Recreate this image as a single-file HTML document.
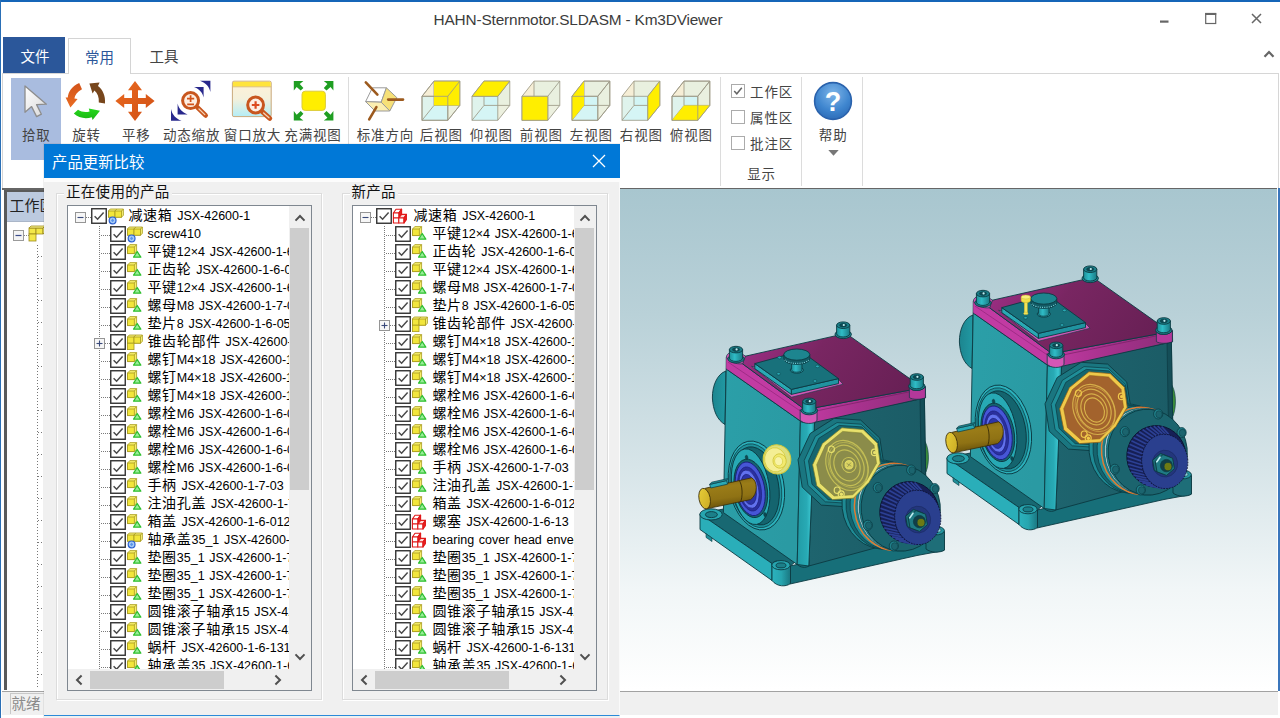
<!DOCTYPE html>
<html lang="zh-CN"><head><meta charset="utf-8"><title>HAHN-Sternmotor.SLDASM - Km3DViewer</title>
<style>
*{box-sizing:border-box;margin:0;padding:0}
html,body{width:1280px;height:718px;overflow:hidden;background:#fff}
body{font-family:"Liberation Sans","Noto Sans CJK SC",sans-serif;font-size:14px;color:#444}
#win{position:absolute;left:0;top:0;width:1280px;height:718px;background:#fff;overflow:hidden}
#win:before{content:"";position:absolute;left:0;top:0;width:1280px;height:2px;background:#1565b8;z-index:5}
#win:after{content:"";position:absolute;left:0;top:0;width:1.3px;height:718px;background:#2a6fb6;z-index:5}
#rborder{position:absolute}
#title{position:absolute;left:0;top:8px;width:1156px;text-align:center;font-size:15.4px;line-height:23px;color:#3c3c3c;letter-spacing:-0.17px}
#ctl{position:absolute;left:1150px;top:0}
#collapse{position:absolute;left:1263px;top:50px}
#tabs{position:absolute;left:0;top:37px;height:37px;width:1280px}
.tab{position:absolute;top:0;height:36px;line-height:41px;text-align:center;font-size:14.5px}
.tab.file{left:3px;width:62px;background:#2b579a;color:#fff;padding-left:2px}
.tab.home{left:68px;top:1px;width:63px;height:36px;border:1px solid #d4d4d4;border-bottom:none;background:#fff;color:#2b579a;z-index:2;line-height:39px}
.tab.tools{left:132px;width:64px;color:#444}
#ribbon{position:absolute;left:2px;top:73px;width:1277px;height:115px;border:1px solid #d6d6d6;border-bottom:none;background:#fff}
#ribbonline{position:absolute;left:2px;top:188px;width:1275px;height:1.6px;background:#666}
/* ribbon content uses absolute coords relative to page: offset -3,-74 */
#ribbon .abs{position:absolute}
.rbtn{position:absolute;top:4px;height:82px}
.rlabel{position:absolute;top:52px;font-size:13.5px;letter-spacing:0.85px;line-height:22px;text-indent:0.8px;white-space:nowrap;text-align:center;color:#444;transform:translateX(-50%)}
.rsep{position:absolute;top:3px;width:1px;height:109px;background:#dcdcdc}
.ricon{position:absolute}
.cb{position:absolute;width:13.5px;height:13.5px;border:1px solid #ababab;background:#fff}
.cbl{position:absolute;font-size:13.5px;letter-spacing:0.9px;line-height:22px;white-space:nowrap;color:#444}
#work{position:absolute;left:3.5px;top:190px;width:60px;height:500px;background:#fff;border-left:3px solid #5a5a5a;border-top:2.5px solid #5a5a5a}
#workhead{height:29.5px;background:#bccadf;font-size:15px;line-height:28px;padding-left:3px;color:#222;white-space:nowrap;border-bottom:1px solid #aab6c8}
#worktree{position:absolute;left:-1px;top:30.5px}
#view{position:absolute;left:620px;top:189px;width:656.8px;height:500.6px;background:linear-gradient(#a8c6cf 0%,#b9d1d8 25%,#d6e4e8 55%,#f1f6f7 80%,#fff 100%);overflow:hidden}
#view svg{position:absolute;left:0;top:0}
#rblue{position:absolute;left:1278.2px;top:188px;width:1.8px;height:502.5px;background:#3a76bc}
#status{position:absolute;left:1.5px;top:691px;width:1276px;height:23.5px;background:#f0f0f0;border-top:1.5px solid #a2a2a2}
#statuspane{position:absolute;left:8.5px;top:0.5px;width:400px;height:21px;border:1px solid #c8c8c8;border-right:none;border-bottom:none;font-size:14.5px;line-height:20px;padding-left:0.5px;color:#8a8a8a}
#dlgshadow{position:absolute;left:43px;top:142.5px;width:577px;height:576px;background:rgba(0,0,0,0.06)}
#dlg{position:absolute;left:44px;top:143.5px;width:576px;height:572px;background:#f0f0f0;border-bottom:1.5px solid #2b8ad8;border-right:1.5px solid #fafafa}
#dlgtitle{position:absolute;left:0;top:0;width:576px;height:34.5px;background:#0078d7;color:#fff;font-size:15.4px;line-height:37px;padding-left:8px}
#dlgtitle svg{position:absolute;left:548px;top:10.5px}
.grp{position:absolute;border:1px solid #dcdcdc;box-shadow:inset 1px 1px 0 #fff, 1px 1px 0 #fff}
.grplabel{position:absolute;font-size:14.5px;line-height:18px;color:#111;background:#f0f0f0;padding:0 2px;white-space:nowrap;letter-spacing:0.3px}
.tree{position:absolute;width:245px;height:486px;background:#fff;border:1px solid #7f8790;overflow:hidden}
.rows{position:absolute;left:0;top:0;width:221px;height:463px;overflow:hidden}
.row{position:absolute;left:0;height:18px;width:400px;white-space:nowrap;font-size:14px;line-height:18px;color:#111}
.row .t{position:absolute;top:-1.8px;font-family:"Liberation Sans","Noto Sans CJK SC",sans-serif;font-weight:400;color:#000;letter-spacing:0.7px}
.row .t b{font-weight:400;font-size:12.5px;letter-spacing:0;word-spacing:1.2px;font-family:"Liberation Sans",sans-serif}
.vs{position:absolute;left:221px;top:0;width:22px;height:463px;background:#f0f0f0}
.hs{position:absolute;left:0;top:463px;width:243px;height:21px;background:#f0f0f0}
.thumb{position:absolute;background:#cdcdcd}
.row .t b i{font-style:normal;font-size:14.5px;line-height:10px;letter-spacing:0.4px}

</style></head>
<body>
<div id="win">
<div id="title">HAHN-Sternmotor.SLDASM - Km3DViewer</div>
<svg id="ctl" width="130" height="40" viewBox="0 0 130 40">
 <rect x="10" y="20.5" width="8.5" height="2.2" fill="#666"/>
 <rect x="55.7" y="13.5" width="10" height="10" fill="none" stroke="#666" stroke-width="1.2"/>
 <rect x="55.2" y="13" width="11" height="2" fill="#666"/>
 <path d="M102 14 L111 23 M111 14 L102 23" stroke="#666" stroke-width="1.5" fill="none"/>
</svg>
<svg id="collapse" width="12" height="8" viewBox="0 0 12 8"><path d="M1.5 6.8 L6 2 L10.5 6.8" stroke="#666" stroke-width="2.2" fill="none"/></svg>
<div id="tabs">
 <div class="tab file">文件</div>
 <div class="tab home">常用</div>
 <div class="tab tools">工具</div>
</div>
<div id="ribbon">
<div class="abs" style="left:8.0px;top:4.3px;width:50px;height:81.5px;background:#a9bcdf"></div>
<svg class="ricon" style="left:15.0px;top:6.0px" width="36" height="42" viewBox="18 80 36 42"><defs><linearGradient id="gcur" x1="0" y1="0" x2="1" y2="1"><stop offset="0" stop-color="#ffffff"/><stop offset="1" stop-color="#d8d8d8"/></linearGradient></defs><path d="M25 86 L25 112.3 L31.6 106.6 L36.6 116.6 L41.4 114.2 L36.6 104.6 L46.4 104.2 Z" fill="url(#gcur)" stroke="#8d8d8d" stroke-width="1.3" stroke-linejoin="round"/></svg>
<div class="rlabel" style="left:32.9px;top:51.2px">拾取</div>
<svg class="ricon" style="left:59.0px;top:4.0px" width="48" height="46" viewBox="62 78 48 46"><defs><linearGradient id="gor" x1="0" y1="0" x2="0" y2="1"><stop offset="0" stop-color="#d2531a"/><stop offset="1" stop-color="#ea6c22"/></linearGradient><linearGradient id="ggr" x1="0" y1="0" x2="0" y2="1"><stop offset="0" stop-color="#25d81d"/><stop offset="1" stop-color="#1bb513"/></linearGradient></defs><path d="M79.2 83 C72 86 68.2 91.8 67.8 97.6 L65.6 97.4 L70.4 107.4 L77.6 99 L74.4 98.6 C74.8 95 77.4 91.6 82 89.2 Z" fill="url(#gor)"/><path d="M89.4 83.6 L99.6 82.4 L98 86 C103 90 105.6 96 105 103.4 L98.8 102.4 C99.2 97.4 97.6 93.2 94.4 90.6 L92.6 93.4 Z" fill="#77461c"/><path d="M73.8 113.6 C78.6 118.2 86 119.2 91.8 117.2 L92.6 120 L100 110.8 L88.8 108.4 L89.6 111.4 C85.6 112.6 81.6 112 78 109.8 Z" fill="url(#ggr)"/></svg>
<div class="rlabel" style="left:83.2px;top:51.2px">旋转</div>
<svg class="ricon" style="left:109.0px;top:4.0px" width="46" height="46" viewBox="112 78 46 46"><defs><linearGradient id="gpn" x1="0" y1="0" x2="1" y2="1"><stop offset="0" stop-color="#ea6a20"/><stop offset="1" stop-color="#d04f14"/></linearGradient></defs><path d="M135 81 L142 90.2 H138 V98 H145.8 V94 L154.6 101 L145.8 108 V104 H138 V111.8 H142 L135 121 L128 111.8 H132 V104 H124.2 V108 L115.4 101 L124.2 94 V98 H132 V90.2 H128 Z" fill="url(#gpn)"/></svg>
<div class="rlabel" style="left:132.9px;top:51.2px">平移</div>
<svg class="ricon" style="left:165.0px;top:4.0px" width="46" height="46" viewBox="168 78 46 46"><g fill="#28288c"><path d="M200 80.8 H210.4 V92 C209.4 87 206 83 200 80.8Z"/><path d="M194 87 H203.6 V97.6 C202.6 92.6 199.4 89 194 87Z"/><path d="M181.6 120.8 H171 V109 C172.2 114.6 175.6 118.6 181.6 120.8Z"/><path d="M187.6 114.4 H177.6 V103.6 C178.6 108.6 182 112.4 187.6 114.4Z"/></g><path d="M197.4 107.4 L205.6 115.4" stroke="#c8561e" stroke-width="4.8" stroke-linecap="round"/><path d="M199 109 L204.8 114.6" stroke="#f6d2b4" stroke-width="1.3" stroke-linecap="round"/><circle cx="190.6" cy="100.6" r="8" fill="#fdeee2" stroke="#c8561e" stroke-width="3"/><path d="M187 98.6 H194.2 M190.6 95.2 V102 M187.2 104.4 H194" stroke="#d2521a" stroke-width="1.7" fill="none"/></svg>
<div class="rlabel" style="left:188.2px;top:51.2px">动态缩放</div>
<svg class="ricon" style="left:225.0px;top:4.0px" width="48" height="46" viewBox="228 78 48 46"><defs><linearGradient id="gwin" x1="0" y1="0" x2="0" y2="1"><stop offset="0" stop-color="#fff1d6"/><stop offset="0.5" stop-color="#f4f1dc"/><stop offset="1" stop-color="#b4edf6"/></linearGradient></defs><rect x="232.4" y="81.2" width="38.8" height="35.4" rx="1.5" fill="url(#gwin)" stroke="#c9a97c" stroke-width="1"/><path d="M232.9 86.6 V82.7 Q232.9 81.7 233.9 81.7 H269.7 Q270.7 81.7 270.7 82.7 V86.6 Z" fill="#ffe43c"/><path d="M232.4 86.8 H271.2" stroke="#d8b860" stroke-width="0.8"/><path d="M262.2 111.6 L269.8 118.4" stroke="#c8561e" stroke-width="4.8" stroke-linecap="round"/><path d="M263.6 113 L269 117.8" stroke="#f6d2b4" stroke-width="1.3" stroke-linecap="round"/><circle cx="255.6" cy="105" r="7.9" fill="#fdeee2" stroke="#c8561e" stroke-width="3"/><path d="M251.8 105 H259.4 M255.6 101.2 V108.8" stroke="#dc4a1e" stroke-width="2.2" fill="none"/></svg>
<div class="rlabel" style="left:249.1px;top:51.2px">窗口放大</div>
<svg class="ricon" style="left:287.0px;top:4.0px" width="48" height="46" viewBox="290 78 48 46"><rect x="302" y="91.2" width="23.4" height="19.2" rx="3.2" fill="#ffee00" stroke="#dccb3a" stroke-width="1"/><path d="M293.8 81 L303.40000000000003 81 L299.752 83.88 L303.40000000000003 87.912 L300.712 90.6 L296.68 86.952 L293.8 90.6 Z" fill="#1f9e22"/><path d="M333.4 81 L323.79999999999995 81 L327.448 83.88 L323.79999999999995 87.912 L326.488 90.6 L330.52 86.952 L333.4 90.6 Z" fill="#1f9e22"/><path d="M293.8 120.6 L303.40000000000003 120.6 L299.752 117.72 L303.40000000000003 113.68799999999999 L300.712 111.0 L296.68 114.648 L293.8 111.0 Z" fill="#1f9e22"/><path d="M333.4 120.6 L323.79999999999995 120.6 L327.448 117.72 L323.79999999999995 113.68799999999999 L326.488 111.0 L330.52 114.648 L333.4 111.0 Z" fill="#1f9e22"/></svg>
<div class="rlabel" style="left:309.6px;top:51.2px">充满视图</div>
<div class="rsep" style="left:344.5px"></div>
<svg class="ricon" style="left:357.0px;top:4.0px" width="48" height="46" viewBox="360 78 48 46"><g stroke="#9a9a9a" stroke-width="1" stroke-linejoin="round"><path d="M372.4 87.8 H386.4 L381.2 102.2 L365.6 101.6 Z" fill="#ffffff"/><path d="M386.4 87.8 L396.8 97.6 L389.8 111 L381.2 102.2 Z" fill="#f6e078"/><path d="M365.6 101.6 L381.2 102.2 L389.8 111 H375 Z" fill="#fbeeb0"/></g><g stroke="#9c5a1e" stroke-width="2.6" stroke-linecap="round"><path d="M365.8 82.4 L377.4 94.6"/><path d="M388.2 99.6 H403"/><path d="M376.4 107.2 L369.2 119.4"/></g></svg>
<div class="rlabel" style="left:382.0px;top:51.2px">标准方向</div>
<svg class="ricon" style="left:416.2px;top:4.0px" width="46" height="46" viewBox="419.2 78 46 46"><path d="M422.2 96.3 L434.2 81.1 V105.4 L422.2 120.3 Z" fill="#f6eed6" fill-opacity="1"/><path d="M422.2 120.3 L434.2 105.4 H460.0 L448.0 120.3 Z" fill="#d2f4f4" fill-opacity="1"/><path d="M422.2 96.3 L434.2 81.1 H460.0 L448.0 96.3 Z" fill="#f6eed6" fill-opacity="0.7"/><path d="M448.0 96.3 L460.0 81.1 V105.4 L448.0 120.3 Z" fill="#f6eed6" fill-opacity="0.7"/><path d="M422.2 96.3 H448.0 V120.3 H422.2 Z" fill="#d6f5f5" fill-opacity="0.7"/><g stroke="#9d9a86" stroke-width="0.85" fill="none" stroke-linejoin="round"><path d="M434.2 81.1 H460.0 V105.4 H434.2 Z"/><path d="M422.2 96.3 H448.0 V120.3 H422.2 Z"/><path d="M422.2 96.3 L434.2 81.1 M448.0 96.3 L460.0 81.1 M448.0 120.3 L460.0 105.4 M422.2 120.3 L434.2 105.4"/></g><path d="M434.2 81.1 H460.0 V105.4 H434.2 Z" fill="#ffee00"/><g stroke="#9d9a86" stroke-width="0.85" fill="none" stroke-linejoin="round"><path d="M422.2 96.3 H448.0 V120.3 H422.2 Z"/><path d="M422.2 96.3 L434.2 81.1 H460.0 V105.4 L448.0 120.3 M448.0 96.3 L460.0 81.1"/></g></svg>
<div class="rlabel" style="left:438.0px;top:51.2px">后视图</div>
<svg class="ricon" style="left:466.2px;top:4.0px" width="46" height="46" viewBox="469.2 78 46 46"><path d="M484.2 81.1 H510.0 V105.4 H484.2 Z" fill="#c9f3f5" fill-opacity="1"/><path d="M472.2 96.3 L484.2 81.1 V105.4 L472.2 120.3 Z" fill="#f6eed6" fill-opacity="1"/><path d="M472.2 120.3 L484.2 105.4 H510.0 L498.0 120.3 Z" fill="#d2f4f4" fill-opacity="1"/><path d="M498.0 96.3 L510.0 81.1 V105.4 L498.0 120.3 Z" fill="#f6eed6" fill-opacity="0.7"/><path d="M472.2 96.3 H498.0 V120.3 H472.2 Z" fill="#d6f5f5" fill-opacity="0.7"/><g stroke="#9d9a86" stroke-width="0.85" fill="none" stroke-linejoin="round"><path d="M484.2 81.1 H510.0 V105.4 H484.2 Z"/><path d="M472.2 96.3 H498.0 V120.3 H472.2 Z"/><path d="M472.2 96.3 L484.2 81.1 M498.0 96.3 L510.0 81.1 M498.0 120.3 L510.0 105.4 M472.2 120.3 L484.2 105.4"/></g><path d="M472.2 96.3 L484.2 81.1 H510.0 L498.0 96.3 Z" fill="#ffee00"/><g stroke="#9d9a86" stroke-width="0.85" fill="none" stroke-linejoin="round"><path d="M472.2 96.3 L484.2 81.1 H510.0 L498.0 96.3 Z"/></g></svg>
<div class="rlabel" style="left:488.0px;top:51.2px">仰视图</div>
<svg class="ricon" style="left:516.2px;top:4.0px" width="46" height="46" viewBox="519.2 78 46 46"><path d="M534.2 81.1 H560.0 V105.4 H534.2 Z" fill="#c9f3f5" fill-opacity="1"/><path d="M522.2 96.3 L534.2 81.1 V105.4 L522.2 120.3 Z" fill="#f6eed6" fill-opacity="1"/><path d="M522.2 120.3 L534.2 105.4 H560.0 L548.0 120.3 Z" fill="#d2f4f4" fill-opacity="1"/><path d="M522.2 96.3 L534.2 81.1 H560.0 L548.0 96.3 Z" fill="#f6eed6" fill-opacity="0.7"/><path d="M548.0 96.3 L560.0 81.1 V105.4 L548.0 120.3 Z" fill="#f6eed6" fill-opacity="0.7"/><g stroke="#9d9a86" stroke-width="0.85" fill="none" stroke-linejoin="round"><path d="M534.2 81.1 H560.0 V105.4 H534.2 Z"/><path d="M522.2 96.3 H548.0 V120.3 H522.2 Z"/><path d="M522.2 96.3 L534.2 81.1 M548.0 96.3 L560.0 81.1 M548.0 120.3 L560.0 105.4 M522.2 120.3 L534.2 105.4"/></g><path d="M522.2 96.3 H548.0 V120.3 H522.2 Z" fill="#ffee00"/><g stroke="#9d9a86" stroke-width="0.85" fill="none" stroke-linejoin="round"><path d="M522.2 96.3 H548.0 V120.3 H522.2 Z"/></g></svg>
<div class="rlabel" style="left:538.0px;top:51.2px">前视图</div>
<svg class="ricon" style="left:566.2px;top:4.0px" width="46" height="46" viewBox="569.2 78 46 46"><path d="M584.2 81.1 H610.0 V105.4 H584.2 Z" fill="#c9f3f5" fill-opacity="1"/><path d="M572.2 120.3 L584.2 105.4 H610.0 L598.0 120.3 Z" fill="#d2f4f4" fill-opacity="1"/><path d="M572.2 96.3 L584.2 81.1 H610.0 L598.0 96.3 Z" fill="#f6eed6" fill-opacity="0.7"/><path d="M598.0 96.3 L610.0 81.1 V105.4 L598.0 120.3 Z" fill="#f6eed6" fill-opacity="0.7"/><path d="M572.2 96.3 H598.0 V120.3 H572.2 Z" fill="#d6f5f5" fill-opacity="0.7"/><g stroke="#9d9a86" stroke-width="0.85" fill="none" stroke-linejoin="round"><path d="M584.2 81.1 H610.0 V105.4 H584.2 Z"/><path d="M572.2 96.3 H598.0 V120.3 H572.2 Z"/><path d="M572.2 96.3 L584.2 81.1 M598.0 96.3 L610.0 81.1 M598.0 120.3 L610.0 105.4 M572.2 120.3 L584.2 105.4"/></g><path d="M572.2 96.3 L584.2 81.1 V105.4 L572.2 120.3 Z" fill="#ffee00"/><g stroke="#9d9a86" stroke-width="0.85" fill="none" stroke-linejoin="round"><path d="M572.2 96.3 H598.0 V120.3 H572.2 Z"/><path d="M572.2 96.3 L584.2 81.1 H610.0 V105.4 L598.0 120.3 M598.0 96.3 L610.0 81.1"/></g></svg>
<div class="rlabel" style="left:588.0px;top:51.2px">左视图</div>
<svg class="ricon" style="left:616.2px;top:4.0px" width="46" height="46" viewBox="619.2 78 46 46"><path d="M634.2 81.1 H660.0 V105.4 H634.2 Z" fill="#c9f3f5" fill-opacity="1"/><path d="M622.2 96.3 L634.2 81.1 V105.4 L622.2 120.3 Z" fill="#f6eed6" fill-opacity="1"/><path d="M622.2 120.3 L634.2 105.4 H660.0 L648.0 120.3 Z" fill="#d2f4f4" fill-opacity="1"/><path d="M622.2 96.3 L634.2 81.1 H660.0 L648.0 96.3 Z" fill="#f6eed6" fill-opacity="0.7"/><path d="M622.2 96.3 H648.0 V120.3 H622.2 Z" fill="#d6f5f5" fill-opacity="0.7"/><g stroke="#9d9a86" stroke-width="0.85" fill="none" stroke-linejoin="round"><path d="M634.2 81.1 H660.0 V105.4 H634.2 Z"/><path d="M622.2 96.3 H648.0 V120.3 H622.2 Z"/><path d="M622.2 96.3 L634.2 81.1 M648.0 96.3 L660.0 81.1 M648.0 120.3 L660.0 105.4 M622.2 120.3 L634.2 105.4"/></g><path d="M648.0 96.3 L660.0 81.1 V105.4 L648.0 120.3 Z" fill="#ffee00"/><g stroke="#9d9a86" stroke-width="0.85" fill="none" stroke-linejoin="round"><path d="M648.0 96.3 L660.0 81.1 V105.4 L648.0 120.3 Z"/></g></svg>
<div class="rlabel" style="left:638.0px;top:51.2px">右视图</div>
<svg class="ricon" style="left:666.2px;top:4.0px" width="46" height="46" viewBox="669.2 78 46 46"><path d="M684.2 81.1 H710.0 V105.4 H684.2 Z" fill="#c9f3f5" fill-opacity="1"/><path d="M672.2 96.3 L684.2 81.1 V105.4 L672.2 120.3 Z" fill="#f6eed6" fill-opacity="1"/><path d="M672.2 96.3 L684.2 81.1 H710.0 L698.0 96.3 Z" fill="#f6eed6" fill-opacity="0.7"/><path d="M698.0 96.3 L710.0 81.1 V105.4 L698.0 120.3 Z" fill="#f6eed6" fill-opacity="0.7"/><path d="M672.2 96.3 H698.0 V120.3 H672.2 Z" fill="#d6f5f5" fill-opacity="0.7"/><g stroke="#9d9a86" stroke-width="0.85" fill="none" stroke-linejoin="round"><path d="M684.2 81.1 H710.0 V105.4 H684.2 Z"/><path d="M672.2 96.3 H698.0 V120.3 H672.2 Z"/><path d="M672.2 96.3 L684.2 81.1 M698.0 96.3 L710.0 81.1 M698.0 120.3 L710.0 105.4 M672.2 120.3 L684.2 105.4"/></g><path d="M672.2 120.3 L684.2 105.4 H710.0 L698.0 120.3 Z" fill="#ffee00"/><g stroke="#9d9a86" stroke-width="0.85" fill="none" stroke-linejoin="round"><path d="M672.2 96.3 H698.0 V120.3 H672.2 Z"/><path d="M672.2 96.3 L684.2 81.1 H710.0 V105.4 L698.0 120.3 M698.0 96.3 L710.0 81.1"/></g></svg>
<div class="rlabel" style="left:688.0px;top:51.2px">俯视图</div>
<div class="rsep" style="left:717.4px"></div>
<div class="cb" style="left:728.3px;top:10.4px"><svg width="12" height="12" viewBox="0 0 12 12" style="position:absolute;left:0;top:0"><path d="M2.2 6 L4.8 8.8 L9.8 2.8" fill="none" stroke="#666" stroke-width="1.5"/></svg></div>
<div class="cbl" style="left:747.0px;top:8.4px">工作区</div>
<div class="cb" style="left:728.3px;top:36.4px"></div>
<div class="cbl" style="left:747.0px;top:34.4px">属性区</div>
<div class="cb" style="left:728.3px;top:62.4px"></div>
<div class="cbl" style="left:747.0px;top:60.4px">批注区</div>
<div class="rlabel" style="left:758.2px;top:90px">显示</div>
<div class="rsep" style="left:798.4px"></div>
<svg class="ricon" style="left:809.0px;top:6.0px" width="42" height="42" viewBox="812 80 42 42"><defs><radialGradient id="ghl" cx="0.5" cy="0.3" r="0.75"><stop offset="0" stop-color="#7db4e8"/><stop offset="0.6" stop-color="#3f86cf"/><stop offset="1" stop-color="#2a68b4"/></radialGradient></defs><circle cx="833" cy="101" r="18.4" fill="url(#ghl)" stroke="#2a62ac" stroke-width="1.6"/><text x="833" y="110.6" text-anchor="middle" font-family="Liberation Sans, sans-serif" font-weight="700" font-size="27" fill="#fff">?</text></svg>
<div class="rlabel" style="left:829.8px;top:51.2px">帮助</div>
<svg class="ricon" style="left:824.6px;top:76.0px" width="11" height="6" viewBox="0 0 11 6"><path d="M0.3 0 H10.7 L5.5 5.8 Z" fill="#777"/></svg>
<div class="rsep" style="left:859.2px"></div>
</div>
<div id="ribbonline"></div>
<div id="work">
 <div id="workhead">工作区</div>
 <svg id="worktree" width="40" height="466" viewBox="0 0 40 466">
  <rect x="7.5" y="7.5" width="10" height="10" fill="#f4f4f4" stroke="#9a9a9a"/>
  <path d="M9.5 12.5 H15.5" stroke="#3a4a8a" stroke-width="1.2"/>
  <path d="M18 12.5 H23" stroke="#888" stroke-dasharray="1 1"/>
  <g stroke="#9c8a1e" stroke-width="0.8" fill="#f3e84a">
   <rect x="23" y="5" width="7" height="6"/><rect x="30" y="5" width="7" height="6"/><rect x="23" y="11" width="7" height="7"/>
   <path d="M23 5 l2 -2 h14 l-2 2 z M37 5 l2 -2 v6 l-2 2 z" fill="#fbf38a"/>
  </g>
  <path d="M31.5 22 V466" stroke="#777" stroke-dasharray="1 2"/>
  <g stroke="#777" stroke-dasharray="1 2">
   <path d="M32 33.5 H46"/><path d="M32 55.5 H46"/><path d="M32 77.5 H46"/><path d="M32 99.5 H46"/><path d="M32 121.5 H46"/><path d="M32 143.5 H46"/><path d="M32 165.5 H46"/><path d="M32 187.5 H46"/><path d="M32 209.5 H46"/><path d="M32 231.5 H46"/><path d="M32 253.5 H46"/><path d="M32 275.5 H46"/><path d="M32 297.5 H46"/><path d="M32 319.5 H46"/><path d="M32 341.5 H46"/><path d="M32 363.5 H46"/><path d="M32 385.5 H46"/><path d="M32 407.5 H46"/><path d="M32 429.5 H46"/><path d="M32 451.5 H46"/><path d="M32 473.5 H46"/>
  </g>
 </svg>
</div>
<div id="view">
<svg width="657.5" height="501" viewBox="620 189 657.5 501"><defs>
<linearGradient id="gleft" x1="0" y1="0" x2="1" y2="0.3"><stop offset="0" stop-color="#2b9fa8"/><stop offset="1" stop-color="#2a9aa3"/></linearGradient>
<linearGradient id="gright" x1="0" y1="0" x2="1" y2="0"><stop offset="0" stop-color="#1e646e"/><stop offset="1" stop-color="#1b5c66"/></linearGradient>
<linearGradient id="gcol" x1="0" y1="0" x2="1" y2="0"><stop offset="0" stop-color="#219ba5"/><stop offset="0.55" stop-color="#28aab5"/><stop offset="0.8" stop-color="#3cc6d0"/><stop offset="1" stop-color="#1f8f99"/></linearGradient>
<linearGradient id="gbulge" x1="0" y1="0" x2="1" y2="0"><stop offset="0" stop-color="#1c858f"/><stop offset="1" stop-color="#2199a3"/></linearGradient>
<linearGradient id="gfoot" x1="0" y1="0" x2="1" y2="0"><stop offset="0" stop-color="#2bb2bd"/><stop offset="0.5" stop-color="#27a5af"/><stop offset="1" stop-color="#1a7680"/></linearGradient>
<linearGradient id="gbolt" x1="0" y1="0" x2="1" y2="0"><stop offset="0" stop-color="#1f8f99"/><stop offset="0.4" stop-color="#2fbcc6"/><stop offset="1" stop-color="#1a7a84"/></linearGradient>
<linearGradient id="gtop" x1="0" y1="0.2" x2="1" y2="0.5"><stop offset="0" stop-color="#9c2e84"/><stop offset="0.4" stop-color="#792662"/><stop offset="1" stop-color="#682055"/></linearGradient>
<linearGradient id="gshaft" x1="0" y1="0" x2="0.22" y2="1"><stop offset="0" stop-color="#7a600e"/><stop offset="0.35" stop-color="#9a7c18"/><stop offset="0.7" stop-color="#8f7214"/><stop offset="1" stop-color="#68510a"/></linearGradient>
<linearGradient id="gband" x1="0" y1="0" x2="1" y2="0"><stop offset="0" stop-color="#c23ba3"/><stop offset="0.45" stop-color="#a8328e"/><stop offset="1" stop-color="#8c2d78"/></linearGradient>
<linearGradient id="gshaftend" x1="0" y1="0" x2="1" y2="1"><stop offset="0" stop-color="#e9cf3a"/><stop offset="1" stop-color="#c9a922"/></linearGradient>
</defs><g transform="translate(0 0)">
<path d="M726 371 C717 374 712.2 386 712.4 398 C713 410 717 420 725 424.5 Z" fill="url(#gbulge)" stroke="#0b3a42" stroke-width="0.9"/>
<path d="M924 440 C929 446 930 462 926 472 L924 472 Z" fill="#3a8a3a" stroke="#0b3a42" stroke-width="0.6"/>
<path d="M790.0 566.0 L917.0 538.0 L944.0 532.0 L944.0 550.5 L917.0 555.5 L790.0 584.0 Z" fill="#176f79" stroke="#0b3a42" stroke-width="0.9" stroke-linejoin="round" />
<path d="M700.0 513.8 L723.4 509.0 L797.0 560.0 L790.0 566.5 L772.0 563.5 Z" fill="#186872" stroke="#0b3a42" stroke-width="0.9" stroke-linejoin="round" />
<path d="M700.0 513.8 L772.0 563.5 L772.0 580.5 L700.0 529.5 Z" fill="#2aaeb9" stroke="#0b3a42" stroke-width="0.9" stroke-linejoin="round" />
<path d="M706.0 533.8 L706.0 537.4 L712.0 541.6 L712.0 538.0 Z" fill="#1f8f99" stroke="#0b3a42" stroke-width="0.6" stroke-linejoin="round" />
<path d="M772 563.5 C774 559.5 788 559.8 790.5 566 V583.5 C786 587 777 587 772 580.5 Z" fill="url(#gfoot)" stroke="#0b3a42" stroke-width="0.9"/>
<ellipse cx="781.0" cy="565.2" rx="9.2" ry="4.6" fill="#27a5af" stroke="#0b3a42" stroke-width="0.9" />
<ellipse cx="781.0" cy="565.4" rx="5.0" ry="2.5" fill="#1b7f89" stroke="#0b3a42" stroke-width="0.9" />
<ellipse cx="711.0" cy="514.4" rx="11.2" ry="5.6" fill="#27a5af" stroke="#0b3a42" stroke-width="0.9" />
<ellipse cx="711.4" cy="514.6" rx="6.0" ry="3.0" fill="#1b7f89" stroke="#0b3a42" stroke-width="0.9" />
<path d="M926 530 C928 525.5 942 525.8 944.5 531.5 V550 C940 553 931 553 926 549 Z" fill="#1e6e78" stroke="#0b3a42" stroke-width="0.9"/>
<ellipse cx="935.2" cy="530.6" rx="9.2" ry="4.4" fill="#2497a1" stroke="#0b3a42" stroke-width="0.9" />
<ellipse cx="936.4" cy="530.2" rx="4.6" ry="2.2" fill="#8fd6dc" stroke="#0b3a42" stroke-width="0.6" />
<path d="M726.2 368.8 L800.4 421.0 L797.2 564.5 L723.4 512.6 Z" fill="url(#gleft)" stroke="#0b3a42" stroke-width="0.9" stroke-linejoin="round" />
<path d="M814.6 421.5 L924.4 398.0 L926.6 534.0 L808.8 566.0 Z" fill="url(#gright)" stroke="#0b3a42" stroke-width="0.9" stroke-linejoin="round" />
<path d="M800.4 420.0 L814.6 421.5 L808.8 566.0 L797.2 564.5 Z" fill="url(#gcol)" stroke="#0b3a42" stroke-width="0.9" stroke-linejoin="round" />
<path d="M808.8 566 C806 568.4 800 567.6 797.2 564.5" fill="none" stroke="#0b3a42" stroke-width="0.9" stroke-linecap="round" />
<path d="M920.0 399.0 L924.4 398.0 L926.6 534.0 L922.4 535.2 Z" fill="#154e58" stroke="#0b3a42" stroke-width="0.7" stroke-linejoin="round" />
<ellipse cx="756.4" cy="485.5" rx="27.4" ry="45.0" fill="#2bb0bb" stroke="#0b3a42" stroke-width="0.9" transform="rotate(-11 756.4 485.5)" />
<ellipse cx="755.8" cy="485.7" rx="25.2" ry="42.4" fill="#1f929c" stroke="#0b3a42" stroke-width="0.7" transform="rotate(-11 755.8 485.7)" />
<ellipse cx="755.9" cy="485.9" rx="22.6" ry="39.6" fill="#14646e" stroke="#0b3a42" stroke-width="0.9" transform="rotate(-11 755.9 485.9)" />
<ellipse cx="750.6" cy="486.7" rx="18.6" ry="38.2" fill="#27a9b4" stroke="#0b3a42" stroke-width="0.9" transform="rotate(-9 750.6 486.7)" />
<ellipse cx="746.6" cy="457.4" rx="1.3" ry="2.2" fill="#0f4a54" stroke="#0b3a42" stroke-width="0.5" transform="rotate(-11 746.6 457.4)" />
<ellipse cx="765.0" cy="514.6" rx="1.3" ry="2.2" fill="#0f4a54" stroke="#0b3a42" stroke-width="0.5" transform="rotate(-11 765.0 514.6)" />
<ellipse cx="750.8" cy="488.4" rx="16.2" ry="29.6" fill="#14646e" stroke="#0b3a42" stroke-width="0.9" transform="rotate(-11 750.8 488.4)" />
<ellipse cx="750.2" cy="488.8" rx="14.4" ry="27.2" fill="#4656d6" stroke="#1a1f7a" stroke-width="0.9" transform="rotate(-11 750.2 488.8)" />
<ellipse cx="749.6" cy="489.0" rx="11.4" ry="22.4" fill="#2a2f9e" stroke="#1a1f7a" stroke-width="0.6" transform="rotate(-11 749.6 489.0)" />
<ellipse cx="749.0" cy="489.2" rx="9.6" ry="19.4" fill="#6272ee" stroke="#1a1f7a" stroke-width="0.6" transform="rotate(-11 749.0 489.2)" />
<ellipse cx="748.6" cy="489.4" rx="7.4" ry="15.4" fill="#2c34a8" stroke="#1a1f7a" stroke-width="0.6" transform="rotate(-11 748.6 489.4)" />
<path d="M705.2 488.3 L751.6 477.8 C757.6 480.6 758.4 494 750.6 499.6 L706.4 508.8 Z" fill="url(#gshaft)" stroke="#3a2c06" stroke-width="0.8"/>
<path d="M739.4 480.6 C742.6 485 743 497 740.6 501.8" fill="none" stroke="#3a2c06" stroke-width="0.9" stroke-linecap="round" />
<ellipse cx="704.6" cy="498.6" rx="5.6" ry="10.4" fill="url(#gshaftend)" stroke="#3a2c06" stroke-width="0.8" transform="rotate(-11 704.6 498.6)" />
<path d="M709.6 484.4 L726.4 480.6 L727.6 484.2 L710.8 488.0 Z" fill="#2aa9b4" stroke="#0b3a42" stroke-width="0.7" stroke-linejoin="round" />
<path d="M709.6 484.4 L711.6 482.2 L727.8 478.6 L726.4 480.6 Z" fill="#1f8f99" stroke="#0b3a42" stroke-width="0.7" stroke-linejoin="round" />
<path d="M884.0 465.4 L871.8 491.7 L847.8 506.9 L821.3 505.1 L802.2 487.1 L798.0 459.8 L810.2 433.5 L834.2 418.3 L860.7 420.1 L879.8 438.1 Z" fill="#1a7680" stroke="#0b3a42" stroke-width="0.9" stroke-linejoin="round" />
<path d="M882.2 465.6 L871.1 489.6 L849.4 503.4 L825.3 501.8 L808.0 485.4 L804.2 460.4 L815.3 436.4 L837.0 422.6 L861.1 424.2 L878.4 440.6 Z" fill="#1f8e98" stroke="#0b3a42" stroke-width="0.7" stroke-linejoin="round" />
<path d="M881.5 465.7 L871.2 488.3 L850.8 501.2 L828.2 499.7 L812.0 484.3 L808.5 460.9 L818.8 438.3 L839.2 425.4 L861.8 426.9 L878.0 442.3 Z" fill="#15666f" stroke="#0b3a42" stroke-width="0.7" stroke-linejoin="round" />
<ellipse cx="882.0" cy="504.5" rx="40.0" ry="44.5" fill="#1e8a94" stroke="#0b3a42" stroke-width="0.9" transform="rotate(-6 882.0 504.5)" />
<ellipse cx="886.0" cy="505.5" rx="40.0" ry="44.2" fill="#15646e" stroke="#0b3a42" stroke-width="0.7" transform="rotate(-6 886.0 505.5)" />
<ellipse cx="890.0" cy="506.2" rx="39.9" ry="43.8" fill="#1f8e98" stroke="#0b3a42" stroke-width="0.7" transform="rotate(-6 890.0 506.2)" />
<ellipse cx="894.3" cy="506.8" rx="39.8" ry="43.5" fill="#1d828c" stroke="#e27c32" stroke-width="1.5" transform="rotate(-6 894.3 506.8)" />
<ellipse cx="897.2" cy="507.4" rx="39.6" ry="43.3" fill="#c6ecf0" stroke="#0b3a42" stroke-width="0.5" transform="rotate(-6 897.2 507.4)" />
<ellipse cx="898.8" cy="507.8" rx="39.6" ry="43.2" fill="#1d828c" stroke="#0b3a42" stroke-width="0.6" transform="rotate(-6 898.8 507.8)" />
<ellipse cx="900.7" cy="508.2" rx="39.6" ry="43.0" fill="#1b646e" stroke="#0b3a42" stroke-width="0.9" transform="rotate(-6 900.7 508.2)" />
<ellipse cx="911.2" cy="470.0" rx="4.6" ry="5.0" fill="#1f7f89" stroke="#0b3a42" stroke-width="0.8" />
<ellipse cx="912.0" cy="470.3" rx="3.2" ry="3.6" fill="#1b646e" stroke="#0b3a42" stroke-width="0.5" />
<ellipse cx="877.8" cy="487.6" rx="4.6" ry="5.0" fill="#1f7f89" stroke="#0b3a42" stroke-width="0.8" />
<ellipse cx="878.6" cy="487.9" rx="3.2" ry="3.6" fill="#1b646e" stroke="#0b3a42" stroke-width="0.5" />
<ellipse cx="867.8" cy="525.2" rx="4.6" ry="5.0" fill="#1f7f89" stroke="#0b3a42" stroke-width="0.8" />
<ellipse cx="868.6" cy="525.5" rx="3.2" ry="3.6" fill="#1b646e" stroke="#0b3a42" stroke-width="0.5" />
<ellipse cx="893.8" cy="546.0" rx="4.6" ry="5.0" fill="#1f7f89" stroke="#0b3a42" stroke-width="0.8" />
<ellipse cx="894.6" cy="546.3" rx="3.2" ry="3.6" fill="#1b646e" stroke="#0b3a42" stroke-width="0.5" />
<ellipse cx="934.6" cy="488.6" rx="4.6" ry="5.0" fill="#1f7f89" stroke="#0b3a42" stroke-width="0.8" />
<ellipse cx="935.4" cy="488.9" rx="3.2" ry="3.6" fill="#1b646e" stroke="#0b3a42" stroke-width="0.5" />
<ellipse cx="909.4" cy="512.4" rx="29.6" ry="30.8" fill="#161f55" stroke="#0c1130" stroke-width="0.9" transform="rotate(-6 909.4 512.4)" />
<path d="M910.4 542.8 L918.4 544.4 M906.5 542.7 L915.3 544.3 M902.6 542.0 L912.3 543.7 M898.9 540.8 L909.3 542.6 M895.3 539.0 L906.5 541.0 M892.0 536.8 L903.9 539.1 M889.1 534.2 L901.6 536.7 M886.4 531.2 L899.5 534.0 M884.2 527.8 L897.8 531.0 M882.5 524.2 L896.4 527.7 M881.2 520.3 L895.4 524.3 M880.4 516.3 L894.8 520.7 M880.2 512.2 L894.6 517.1 M880.5 508.2 L894.8 513.4 M881.3 504.2 L895.5 509.8 M882.6 500.3 L896.5 506.4 M884.4 496.7 L897.9 503.2 M886.6 493.4 L899.7 500.2 M889.3 490.4 L901.8 497.5 M892.3 487.8 L904.1 495.2 M895.6 485.6 L906.7 493.2 M899.2 483.9 L909.6 491.7 M902.9 482.8 L912.5 490.7 M906.8 482.1 L915.6 490.1 M910.7 482.0 L918.6 490.0 M914.6 482.5 L921.7 490.4" stroke="#2c4094" stroke-width="1.7" fill="none"/>
<ellipse cx="917.8" cy="517.4" rx="23.0" ry="27.2" fill="#2a3f8e" stroke="#0c1130" stroke-width="0.9" transform="rotate(-6 917.8 517.4)" stroke-dasharray="1.6 1.2"/>
<ellipse cx="917.8" cy="517.4" rx="22.2" ry="26.4" fill="#2a3f8e" stroke="none" stroke-width="0" transform="rotate(-6 917.8 517.4)" />
<ellipse cx="918.0" cy="519.6" rx="12.6" ry="13.4" fill="#23367c" stroke="#1a2860" stroke-width="0.6" transform="rotate(-6 918.0 519.6)" />
<path d="M924.8 523.4 L917.0 530.2 L907.4 526.6 L905.6 516.2 L913.4 509.4 L923.0 513.0 Z" fill="#1a6d77" stroke="#0b3a42" stroke-width="0.9" stroke-linejoin="round" />
<path d="M927.4 524.6 L919.6 531.4 L910.0 527.8 L908.2 517.4 L916.0 510.6 L925.6 514.2 Z" fill="#1f7a84" stroke="#0b3a42" stroke-width="0.9" stroke-linejoin="round" />
<ellipse cx="919.4" cy="521.6" rx="6.0" ry="6.2" fill="#123e48" stroke="#0b3a42" stroke-width="0.7" />
<ellipse cx="921.0" cy="522.6" rx="3.9" ry="4.1" fill="#6d7a14" stroke="#0b3a42" stroke-width="0.6" />
<path d="M909.8 517.8 l3.2 -4.6" stroke="#bfeef2" stroke-width="1.6" stroke-linecap="round"/>
<path d="M841.9 427.8 L863.2 429.6 L877.4 443.2 L880.2 463.2 L869.0 482.4 L853.4 498.2 L832.4 499.6 L816.8 485.8 L812.6 464.8 L822.4 443.6 Z" fill="#e8e16c" stroke="#77782a" stroke-width="0.7" stroke-linejoin="round" />
<path d="M842.6 431.4 L861.5 433.0 L874.0 445.3 L876.5 463.3 L866.6 480.6 L852.8 494.8 L834.2 496.0 L820.4 483.6 L816.7 464.7 L825.4 445.6 Z" fill="#8b8c4a" stroke="#77782a" stroke-width="0.5" stroke-linejoin="round" />
<ellipse cx="847.0" cy="465.4" rx="20.2" ry="25.9" fill="none" stroke="#c9c357" stroke-width="1.2" transform="rotate(-24 847.0 465.4)" stroke-opacity="0.9"/>
<ellipse cx="847.0" cy="465.4" rx="16.3" ry="20.9" fill="none" stroke="#c9c357" stroke-width="1.2" transform="rotate(-24 847.0 465.4)" stroke-opacity="0.9"/>
<ellipse cx="847.0" cy="465.4" rx="12.5" ry="16.0" fill="none" stroke="#c9c357" stroke-width="1.2" transform="rotate(-24 847.0 465.4)" stroke-opacity="0.9"/>
<ellipse cx="848.0" cy="465.0" rx="18.5" ry="23.7" fill="none" stroke="#c9c357" stroke-width="0.8" transform="rotate(-30 848.0 465.0)" stroke-opacity="0.7"/>
<ellipse cx="849.0" cy="465.0" rx="7.0" ry="7.6" fill="none" stroke="#c9c357" stroke-width="1.0" transform="rotate(-20 849.0 465.0)" />
<ellipse cx="849.0" cy="464.8" rx="4.0" ry="4.2" fill="#d9d260" stroke="#e8e16c" stroke-width="0.9" />
<path d="M847 463.6 l4 2.4 M850.6 463 l-3 3.6" fill="none" stroke="#8b8c4a" stroke-width="0.7" stroke-linecap="round" />
<ellipse cx="831.4" cy="449.2" rx="3.0" ry="3.2" fill="none" stroke="#e8e16c" stroke-width="1.2" />
<ellipse cx="874.4" cy="452.4" rx="3.0" ry="3.2" fill="none" stroke="#e8e16c" stroke-width="1.2" />
<ellipse cx="841.2" cy="494.0" rx="3.0" ry="3.2" fill="none" stroke="#e8e16c" stroke-width="1.2" />
<ellipse cx="837.2" cy="490.2" rx="3.0" ry="3.2" fill="none" stroke="#e8e16c" stroke-width="1.2" />
<ellipse cx="874.6" cy="452.6" rx="1.6" ry="1.7" fill="#e8e16c" stroke="none" stroke-width="0" />
<ellipse cx="841.4" cy="494.2" rx="1.6" ry="1.7" fill="#e8e16c" stroke="none" stroke-width="0" />
<ellipse cx="777.0" cy="459.4" rx="13.8" ry="14.6" fill="#ece57a" stroke="#d6cb3a" stroke-width="1.0" transform="rotate(-11 777.0 459.4)" fill-opacity="0.92"/>
<ellipse cx="775.2" cy="459.8" rx="10.6" ry="12.2" fill="#f4ee94" stroke="#d6cb3a" stroke-width="0.8" transform="rotate(-11 775.2 459.8)" />
<ellipse cx="779.6" cy="461.0" rx="6.6" ry="7.2" fill="#f2ea70" stroke="#cfc43a" stroke-width="0.8" transform="rotate(-11 779.6 461.0)" />
<ellipse cx="778.6" cy="461.2" rx="4.0" ry="4.6" fill="#f8f3a8" stroke="#d6cb3a" stroke-width="0.6" transform="rotate(-11 778.6 461.2)" />
<path d="M726.3 357.2 L742.6 363.8 L805.0 409.6 L808.4 422.4 L801.5 421.8 L726.2 369.0 Z" fill="#c23ba3" stroke="#0b3a42" stroke-width="0.9" stroke-linejoin="round" />
<path d="M805.0 409.6 L913.7 389.4 L925.4 386.8 L925.6 397.8 L814.4 422.4 L801.5 421.8 Z" fill="url(#gband)" stroke="#0b3a42" stroke-width="0.9" stroke-linejoin="round" />
<path d="M727 361.4 L803 412.8" fill="none" stroke="#8a2474" stroke-width="0.6" stroke-linecap="round" />
<path d="M813 411.6 L925 388.6" fill="none" stroke="#6e1c5c" stroke-width="0.6" stroke-linecap="round" />
<path d="M744.0 356.5 L846.0 333.4 L919.6 385.6 L913.7 389.4 L805.0 409.6 L742.6 363.8 Z" fill="url(#gtop)" stroke="#0b3a42" stroke-width="0.9" stroke-linejoin="round" />
<path d="M800.2 409.6 C802 414.6 815 415 817 409.8 V420.6 C814 424.6 803 424.4 800.2 420 Z" fill="#d457b6" stroke="#0b3a42" stroke-width="0.8"/>
<path d="M726.3 357.2 C726.6 352.6 733 350.6 740 352.6 L745.5 356.2 L742.6 363.8 C736 364.4 729 362 726.3 357.2 Z" fill="#d457b6" stroke="#0b3a42" stroke-width="0.7"/>
<path d="M726.3 357.2 V368.6 L728 369.8 V361" fill="#c23ba3" stroke="none"/>
<path d="M909.4 387.6 C912 391.8 922 391.2 925.4 386.8 V397.8 C921 399.6 912.6 400 909.4 397.6 Z" fill="#b4389a" stroke="#0b3a42" stroke-width="0.7"/>
<path d="M909.4 387.6 C910 383.4 916 381.6 921 383.2 L925.4 386.8 C922 391.2 912 391.8 909.4 387.6 Z" fill="#a8308e" stroke="#0b3a42" stroke-width="0.6"/>
<path d="M751.6 366.4 L791.6 397.2 L843.0 384.2 L838.6 379.4 Z" fill="#d457b6" stroke="#0b3a42" stroke-width="0.6" stroke-linejoin="round" />
<path d="M754.8 363.6 L791.4 389.4 L791.4 394.4 L754.8 368.6 Z" fill="#2aa9b4" stroke="#0b3a42" stroke-width="0.9" stroke-linejoin="round" />
<path d="M791.4 389.4 L838.5 378.6 L838.5 383.6 L791.4 394.4 Z" fill="#2093a0" stroke="#0b3a42" stroke-width="0.9" stroke-linejoin="round" />
<path d="M754.8 363.6 L800.8 351.0 L838.5 378.6 L791.4 389.4 Z" fill="#18717b" stroke="#0b3a42" stroke-width="0.9" stroke-linejoin="round" />
<ellipse cx="779.6" cy="357.6" rx="1.9" ry="1.3" fill="#2aa9b4" stroke="#0b3a42" stroke-width="0.5" />
<ellipse cx="817.4" cy="366.4" rx="1.9" ry="1.3" fill="#2aa9b4" stroke="#0b3a42" stroke-width="0.5" />
<ellipse cx="778.6" cy="373.8" rx="1.9" ry="1.3" fill="#2aa9b4" stroke="#0b3a42" stroke-width="0.5" />
<ellipse cx="815.0" cy="381.0" rx="1.9" ry="1.3" fill="#2aa9b4" stroke="#0b3a42" stroke-width="0.5" />
<ellipse cx="796.8" cy="370.0" rx="6.6" ry="3.2" fill="#2aa9b4" stroke="#0b3a42" stroke-width="0.9" />
<path d="M791.5999999999999 362.6 V369.6 A5.2 2.6 0 0 0 802.0 369.6 V362.6 Z" fill="url(#gbolt)" stroke="#0b3a42" stroke-width="0.8"/>
<path d="M783.8 354.6 V358.8 A13 5.6 0 0 0 809.8 358.8 V354.6 Z" fill="#125a64" stroke="#0b3a42" stroke-width="0.8"/>
<path d="M784.8 360.0 A13 5.6 0 0 0 808.8 360.0" fill="none" stroke="#7fd6de" stroke-width="1.2" stroke-dasharray="0.9 1.3"/>
<ellipse cx="796.8" cy="354.6" rx="13.0" ry="5.6" fill="#1d858f" stroke="#0b3a42" stroke-width="0.9" />
<ellipse cx="736.0" cy="358.7" rx="8.2" ry="4.3" fill="#1d858f" stroke="#0b3a42" stroke-width="0.9" /><path d="M729.4 349.6 V358.1 A6.6 3.3 0 0 0 742.6 358.1 V349.6 Z" fill="url(#gbolt)" stroke="#0b3a42" stroke-width="0.9"/><ellipse cx="736.0" cy="349.6" rx="6.6" ry="3.3" fill="#1b7f89" stroke="#0b3a42" stroke-width="0.9" /><ellipse cx="736.0" cy="349.6" rx="3.6" ry="1.8" fill="#0f4a54" stroke="#0b3a42" stroke-width="0.5" /><circle cx="736.6" cy="349.4" r="1.1" fill="#bfeef2"/>
<ellipse cx="843.2" cy="334.3" rx="8.2" ry="4.3" fill="#1d858f" stroke="#0b3a42" stroke-width="0.9" /><path d="M836.6 325.2 V333.7 A6.6 3.3 0 0 0 849.8 333.7 V325.2 Z" fill="url(#gbolt)" stroke="#0b3a42" stroke-width="0.9"/><ellipse cx="843.2" cy="325.2" rx="6.6" ry="3.3" fill="#1b7f89" stroke="#0b3a42" stroke-width="0.9" /><ellipse cx="843.2" cy="325.2" rx="3.6" ry="1.8" fill="#0f4a54" stroke="#0b3a42" stroke-width="0.5" /><circle cx="843.8" cy="325.0" r="1.1" fill="#bfeef2"/>
<ellipse cx="916.8" cy="386.1" rx="8.2" ry="4.3" fill="#1d858f" stroke="#0b3a42" stroke-width="0.9" /><path d="M910.2 377.0 V385.5 A6.6 3.3 0 0 0 923.4 385.5 V377.0 Z" fill="url(#gbolt)" stroke="#0b3a42" stroke-width="0.9"/><ellipse cx="916.8" cy="377.0" rx="6.6" ry="3.3" fill="#1b7f89" stroke="#0b3a42" stroke-width="0.9" /><ellipse cx="916.8" cy="377.0" rx="3.6" ry="1.8" fill="#0f4a54" stroke="#0b3a42" stroke-width="0.5" /><circle cx="917.4" cy="376.8" r="1.1" fill="#bfeef2"/>
<ellipse cx="809.2" cy="410.5" rx="8.2" ry="4.3" fill="#1d858f" stroke="#0b3a42" stroke-width="0.9" /><path d="M802.6 401.4 V409.9 A6.6 3.3 0 0 0 815.8 409.9 V401.4 Z" fill="url(#gbolt)" stroke="#0b3a42" stroke-width="0.9"/><ellipse cx="809.2" cy="401.4" rx="6.6" ry="3.3" fill="#1b7f89" stroke="#0b3a42" stroke-width="0.9" /><ellipse cx="809.2" cy="401.4" rx="3.6" ry="1.8" fill="#0f4a54" stroke="#0b3a42" stroke-width="0.5" /><circle cx="809.8" cy="401.2" r="1.1" fill="#bfeef2"/>
</g><g transform="translate(247 -56)">
<path d="M726 371 C717 374 712.2 386 712.4 398 C713 410 717 420 725 424.5 Z" fill="url(#gbulge)" stroke="#0b3a42" stroke-width="0.9"/>
<path d="M924 440 C929 446 930 462 926 472 L924 472 Z" fill="#3a8a3a" stroke="#0b3a42" stroke-width="0.6"/>
<path d="M790.0 566.0 L917.0 538.0 L944.0 532.0 L944.0 550.5 L917.0 555.5 L790.0 584.0 Z" fill="#176f79" stroke="#0b3a42" stroke-width="0.9" stroke-linejoin="round" />
<path d="M700.0 513.8 L723.4 509.0 L797.0 560.0 L790.0 566.5 L772.0 563.5 Z" fill="#186872" stroke="#0b3a42" stroke-width="0.9" stroke-linejoin="round" />
<path d="M700.0 513.8 L772.0 563.5 L772.0 580.5 L700.0 529.5 Z" fill="#2aaeb9" stroke="#0b3a42" stroke-width="0.9" stroke-linejoin="round" />
<path d="M706.0 533.8 L706.0 537.4 L712.0 541.6 L712.0 538.0 Z" fill="#1f8f99" stroke="#0b3a42" stroke-width="0.6" stroke-linejoin="round" />
<path d="M772 563.5 C774 559.5 788 559.8 790.5 566 V583.5 C786 587 777 587 772 580.5 Z" fill="url(#gfoot)" stroke="#0b3a42" stroke-width="0.9"/>
<ellipse cx="781.0" cy="565.2" rx="9.2" ry="4.6" fill="#27a5af" stroke="#0b3a42" stroke-width="0.9" />
<ellipse cx="781.0" cy="565.4" rx="5.0" ry="2.5" fill="#1b7f89" stroke="#0b3a42" stroke-width="0.9" />
<ellipse cx="711.0" cy="514.4" rx="11.2" ry="5.6" fill="#27a5af" stroke="#0b3a42" stroke-width="0.9" />
<ellipse cx="711.4" cy="514.6" rx="6.0" ry="3.0" fill="#1b7f89" stroke="#0b3a42" stroke-width="0.9" />
<path d="M926 530 C928 525.5 942 525.8 944.5 531.5 V550 C940 553 931 553 926 549 Z" fill="#1e6e78" stroke="#0b3a42" stroke-width="0.9"/>
<ellipse cx="935.2" cy="530.6" rx="9.2" ry="4.4" fill="#2497a1" stroke="#0b3a42" stroke-width="0.9" />
<ellipse cx="936.4" cy="530.2" rx="4.6" ry="2.2" fill="#8fd6dc" stroke="#0b3a42" stroke-width="0.6" />
<path d="M726.2 368.8 L800.4 421.0 L797.2 564.5 L723.4 512.6 Z" fill="url(#gleft)" stroke="#0b3a42" stroke-width="0.9" stroke-linejoin="round" />
<path d="M814.6 421.5 L924.4 398.0 L926.6 534.0 L808.8 566.0 Z" fill="url(#gright)" stroke="#0b3a42" stroke-width="0.9" stroke-linejoin="round" />
<path d="M800.4 420.0 L814.6 421.5 L808.8 566.0 L797.2 564.5 Z" fill="url(#gcol)" stroke="#0b3a42" stroke-width="0.9" stroke-linejoin="round" />
<path d="M808.8 566 C806 568.4 800 567.6 797.2 564.5" fill="none" stroke="#0b3a42" stroke-width="0.9" stroke-linecap="round" />
<path d="M920.0 399.0 L924.4 398.0 L926.6 534.0 L922.4 535.2 Z" fill="#154e58" stroke="#0b3a42" stroke-width="0.7" stroke-linejoin="round" />
<ellipse cx="756.4" cy="485.5" rx="27.4" ry="45.0" fill="#2bb0bb" stroke="#0b3a42" stroke-width="0.9" transform="rotate(-11 756.4 485.5)" />
<ellipse cx="755.8" cy="485.7" rx="25.2" ry="42.4" fill="#1f929c" stroke="#0b3a42" stroke-width="0.7" transform="rotate(-11 755.8 485.7)" />
<ellipse cx="755.9" cy="485.9" rx="22.6" ry="39.6" fill="#14646e" stroke="#0b3a42" stroke-width="0.9" transform="rotate(-11 755.9 485.9)" />
<ellipse cx="750.6" cy="486.7" rx="18.6" ry="38.2" fill="#27a9b4" stroke="#0b3a42" stroke-width="0.9" transform="rotate(-9 750.6 486.7)" />
<ellipse cx="746.6" cy="457.4" rx="1.3" ry="2.2" fill="#0f4a54" stroke="#0b3a42" stroke-width="0.5" transform="rotate(-11 746.6 457.4)" />
<ellipse cx="765.0" cy="514.6" rx="1.3" ry="2.2" fill="#0f4a54" stroke="#0b3a42" stroke-width="0.5" transform="rotate(-11 765.0 514.6)" />
<ellipse cx="750.8" cy="488.4" rx="16.2" ry="29.6" fill="#14646e" stroke="#0b3a42" stroke-width="0.9" transform="rotate(-11 750.8 488.4)" />
<ellipse cx="750.2" cy="488.8" rx="14.4" ry="27.2" fill="#4656d6" stroke="#1a1f7a" stroke-width="0.9" transform="rotate(-11 750.2 488.8)" />
<ellipse cx="749.6" cy="489.0" rx="11.4" ry="22.4" fill="#2a2f9e" stroke="#1a1f7a" stroke-width="0.6" transform="rotate(-11 749.6 489.0)" />
<ellipse cx="749.0" cy="489.2" rx="9.6" ry="19.4" fill="#6272ee" stroke="#1a1f7a" stroke-width="0.6" transform="rotate(-11 749.0 489.2)" />
<ellipse cx="748.6" cy="489.4" rx="7.4" ry="15.4" fill="#2c34a8" stroke="#1a1f7a" stroke-width="0.6" transform="rotate(-11 748.6 489.4)" />
<path d="M705.2 488.3 L751.6 477.8 C757.6 480.6 758.4 494 750.6 499.6 L706.4 508.8 Z" fill="url(#gshaft)" stroke="#3a2c06" stroke-width="0.8"/>
<path d="M739.4 480.6 C742.6 485 743 497 740.6 501.8" fill="none" stroke="#3a2c06" stroke-width="0.9" stroke-linecap="round" />
<ellipse cx="704.6" cy="498.6" rx="5.6" ry="10.4" fill="url(#gshaftend)" stroke="#3a2c06" stroke-width="0.8" transform="rotate(-11 704.6 498.6)" />
<path d="M709.6 484.4 L726.4 480.6 L727.6 484.2 L710.8 488.0 Z" fill="#2aa9b4" stroke="#0b3a42" stroke-width="0.7" stroke-linejoin="round" />
<path d="M709.6 484.4 L711.6 482.2 L727.8 478.6 L726.4 480.6 Z" fill="#1f8f99" stroke="#0b3a42" stroke-width="0.7" stroke-linejoin="round" />
<path d="M884.0 465.4 L871.8 491.7 L847.8 506.9 L821.3 505.1 L802.2 487.1 L798.0 459.8 L810.2 433.5 L834.2 418.3 L860.7 420.1 L879.8 438.1 Z" fill="#1a7680" stroke="#0b3a42" stroke-width="0.9" stroke-linejoin="round" />
<path d="M882.2 465.6 L871.1 489.6 L849.4 503.4 L825.3 501.8 L808.0 485.4 L804.2 460.4 L815.3 436.4 L837.0 422.6 L861.1 424.2 L878.4 440.6 Z" fill="#1f8e98" stroke="#0b3a42" stroke-width="0.7" stroke-linejoin="round" />
<path d="M881.5 465.7 L871.2 488.3 L850.8 501.2 L828.2 499.7 L812.0 484.3 L808.5 460.9 L818.8 438.3 L839.2 425.4 L861.8 426.9 L878.0 442.3 Z" fill="#15666f" stroke="#0b3a42" stroke-width="0.7" stroke-linejoin="round" />
<ellipse cx="882.0" cy="504.5" rx="40.0" ry="44.5" fill="#1e8a94" stroke="#0b3a42" stroke-width="0.9" transform="rotate(-6 882.0 504.5)" />
<ellipse cx="886.0" cy="505.5" rx="40.0" ry="44.2" fill="#15646e" stroke="#0b3a42" stroke-width="0.7" transform="rotate(-6 886.0 505.5)" />
<ellipse cx="890.0" cy="506.2" rx="39.9" ry="43.8" fill="#1f8e98" stroke="#0b3a42" stroke-width="0.7" transform="rotate(-6 890.0 506.2)" />
<ellipse cx="894.3" cy="506.8" rx="39.8" ry="43.5" fill="#1d828c" stroke="#e27c32" stroke-width="1.5" transform="rotate(-6 894.3 506.8)" />
<ellipse cx="897.2" cy="507.4" rx="39.6" ry="43.3" fill="#c6ecf0" stroke="#0b3a42" stroke-width="0.5" transform="rotate(-6 897.2 507.4)" />
<ellipse cx="898.8" cy="507.8" rx="39.6" ry="43.2" fill="#1d828c" stroke="#0b3a42" stroke-width="0.6" transform="rotate(-6 898.8 507.8)" />
<ellipse cx="900.7" cy="508.2" rx="39.6" ry="43.0" fill="#1b646e" stroke="#0b3a42" stroke-width="0.9" transform="rotate(-6 900.7 508.2)" />
<ellipse cx="911.2" cy="470.0" rx="4.6" ry="5.0" fill="#1f7f89" stroke="#0b3a42" stroke-width="0.8" />
<ellipse cx="912.0" cy="470.3" rx="3.2" ry="3.6" fill="#1b646e" stroke="#0b3a42" stroke-width="0.5" />
<ellipse cx="877.8" cy="487.6" rx="4.6" ry="5.0" fill="#1f7f89" stroke="#0b3a42" stroke-width="0.8" />
<ellipse cx="878.6" cy="487.9" rx="3.2" ry="3.6" fill="#1b646e" stroke="#0b3a42" stroke-width="0.5" />
<ellipse cx="867.8" cy="525.2" rx="4.6" ry="5.0" fill="#1f7f89" stroke="#0b3a42" stroke-width="0.8" />
<ellipse cx="868.6" cy="525.5" rx="3.2" ry="3.6" fill="#1b646e" stroke="#0b3a42" stroke-width="0.5" />
<ellipse cx="893.8" cy="546.0" rx="4.6" ry="5.0" fill="#1f7f89" stroke="#0b3a42" stroke-width="0.8" />
<ellipse cx="894.6" cy="546.3" rx="3.2" ry="3.6" fill="#1b646e" stroke="#0b3a42" stroke-width="0.5" />
<ellipse cx="934.6" cy="488.6" rx="4.6" ry="5.0" fill="#1f7f89" stroke="#0b3a42" stroke-width="0.8" />
<ellipse cx="935.4" cy="488.9" rx="3.2" ry="3.6" fill="#1b646e" stroke="#0b3a42" stroke-width="0.5" />
<ellipse cx="909.4" cy="512.4" rx="29.6" ry="30.8" fill="#161f55" stroke="#0c1130" stroke-width="0.9" transform="rotate(-6 909.4 512.4)" />
<path d="M910.4 542.8 L918.4 544.4 M906.5 542.7 L915.3 544.3 M902.6 542.0 L912.3 543.7 M898.9 540.8 L909.3 542.6 M895.3 539.0 L906.5 541.0 M892.0 536.8 L903.9 539.1 M889.1 534.2 L901.6 536.7 M886.4 531.2 L899.5 534.0 M884.2 527.8 L897.8 531.0 M882.5 524.2 L896.4 527.7 M881.2 520.3 L895.4 524.3 M880.4 516.3 L894.8 520.7 M880.2 512.2 L894.6 517.1 M880.5 508.2 L894.8 513.4 M881.3 504.2 L895.5 509.8 M882.6 500.3 L896.5 506.4 M884.4 496.7 L897.9 503.2 M886.6 493.4 L899.7 500.2 M889.3 490.4 L901.8 497.5 M892.3 487.8 L904.1 495.2 M895.6 485.6 L906.7 493.2 M899.2 483.9 L909.6 491.7 M902.9 482.8 L912.5 490.7 M906.8 482.1 L915.6 490.1 M910.7 482.0 L918.6 490.0 M914.6 482.5 L921.7 490.4" stroke="#2c4094" stroke-width="1.7" fill="none"/>
<ellipse cx="917.8" cy="517.4" rx="23.0" ry="27.2" fill="#2a3f8e" stroke="#0c1130" stroke-width="0.9" transform="rotate(-6 917.8 517.4)" stroke-dasharray="1.6 1.2"/>
<ellipse cx="917.8" cy="517.4" rx="22.2" ry="26.4" fill="#2a3f8e" stroke="none" stroke-width="0" transform="rotate(-6 917.8 517.4)" />
<ellipse cx="918.0" cy="519.6" rx="12.6" ry="13.4" fill="#23367c" stroke="#1a2860" stroke-width="0.6" transform="rotate(-6 918.0 519.6)" />
<path d="M924.8 523.4 L917.0 530.2 L907.4 526.6 L905.6 516.2 L913.4 509.4 L923.0 513.0 Z" fill="#1a6d77" stroke="#0b3a42" stroke-width="0.9" stroke-linejoin="round" />
<path d="M927.4 524.6 L919.6 531.4 L910.0 527.8 L908.2 517.4 L916.0 510.6 L925.6 514.2 Z" fill="#1f7a84" stroke="#0b3a42" stroke-width="0.9" stroke-linejoin="round" />
<ellipse cx="919.4" cy="521.6" rx="6.0" ry="6.2" fill="#123e48" stroke="#0b3a42" stroke-width="0.7" />
<ellipse cx="921.0" cy="522.6" rx="3.9" ry="4.1" fill="#6d7a14" stroke="#0b3a42" stroke-width="0.6" />
<path d="M909.8 517.8 l3.2 -4.6" stroke="#bfeef2" stroke-width="1.6" stroke-linecap="round"/>
<path d="M841.9 427.8 L863.2 429.6 L877.4 443.2 L880.2 463.2 L869.0 482.4 L853.4 498.2 L832.4 499.6 L816.8 485.8 L812.6 464.8 L822.4 443.6 Z" fill="#f0c94a" stroke="#8a5a14" stroke-width="0.7" stroke-linejoin="round" />
<path d="M842.6 431.4 L861.5 433.0 L874.0 445.3 L876.5 463.3 L866.6 480.6 L852.8 494.8 L834.2 496.0 L820.4 483.6 L816.7 464.7 L825.4 445.6 Z" fill="#a3632d" stroke="#8a5a14" stroke-width="0.5" stroke-linejoin="round" />
<ellipse cx="847.0" cy="465.4" rx="20.2" ry="25.9" fill="none" stroke="#dab64c" stroke-width="1.2" transform="rotate(-24 847.0 465.4)" stroke-opacity="0.9"/>
<ellipse cx="847.0" cy="465.4" rx="16.3" ry="20.9" fill="none" stroke="#dab64c" stroke-width="1.2" transform="rotate(-24 847.0 465.4)" stroke-opacity="0.9"/>
<ellipse cx="847.0" cy="465.4" rx="12.5" ry="16.0" fill="none" stroke="#dab64c" stroke-width="1.2" transform="rotate(-24 847.0 465.4)" stroke-opacity="0.9"/>
<ellipse cx="848.0" cy="465.0" rx="18.5" ry="23.7" fill="none" stroke="#dab64c" stroke-width="0.8" transform="rotate(-30 848.0 465.0)" stroke-opacity="0.7"/>
<ellipse cx="847.4" cy="466.0" rx="9.5" ry="12.5" fill="none" stroke="#dab64c" stroke-width="1.1" transform="rotate(-24 847.4 466.0)" />
<ellipse cx="831.4" cy="449.2" rx="3.0" ry="3.2" fill="none" stroke="#f0c94a" stroke-width="1.2" />
<ellipse cx="874.4" cy="452.4" rx="3.0" ry="3.2" fill="none" stroke="#f0c94a" stroke-width="1.2" />
<ellipse cx="841.2" cy="494.0" rx="3.0" ry="3.2" fill="none" stroke="#f0c94a" stroke-width="1.2" />
<ellipse cx="837.2" cy="490.2" rx="3.0" ry="3.2" fill="none" stroke="#f0c94a" stroke-width="1.2" />
<ellipse cx="874.6" cy="452.6" rx="1.6" ry="1.7" fill="#f0c94a" stroke="none" stroke-width="0" />
<ellipse cx="841.4" cy="494.2" rx="1.6" ry="1.7" fill="#f0c94a" stroke="none" stroke-width="0" />
<path d="M726.3 357.2 L742.6 363.8 L805.0 409.6 L808.4 422.4 L801.5 421.8 L726.2 369.0 Z" fill="#c23ba3" stroke="#0b3a42" stroke-width="0.9" stroke-linejoin="round" />
<path d="M805.0 409.6 L913.7 389.4 L925.4 386.8 L925.6 397.8 L814.4 422.4 L801.5 421.8 Z" fill="url(#gband)" stroke="#0b3a42" stroke-width="0.9" stroke-linejoin="round" />
<path d="M727 361.4 L803 412.8" fill="none" stroke="#8a2474" stroke-width="0.6" stroke-linecap="round" />
<path d="M813 411.6 L925 388.6" fill="none" stroke="#6e1c5c" stroke-width="0.6" stroke-linecap="round" />
<path d="M744.0 356.5 L846.0 333.4 L919.6 385.6 L913.7 389.4 L805.0 409.6 L742.6 363.8 Z" fill="url(#gtop)" stroke="#0b3a42" stroke-width="0.9" stroke-linejoin="round" />
<path d="M800.2 409.6 C802 414.6 815 415 817 409.8 V420.6 C814 424.6 803 424.4 800.2 420 Z" fill="#d457b6" stroke="#0b3a42" stroke-width="0.8"/>
<path d="M726.3 357.2 C726.6 352.6 733 350.6 740 352.6 L745.5 356.2 L742.6 363.8 C736 364.4 729 362 726.3 357.2 Z" fill="#d457b6" stroke="#0b3a42" stroke-width="0.7"/>
<path d="M726.3 357.2 V368.6 L728 369.8 V361" fill="#c23ba3" stroke="none"/>
<path d="M909.4 387.6 C912 391.8 922 391.2 925.4 386.8 V397.8 C921 399.6 912.6 400 909.4 397.6 Z" fill="#b4389a" stroke="#0b3a42" stroke-width="0.7"/>
<path d="M909.4 387.6 C910 383.4 916 381.6 921 383.2 L925.4 386.8 C922 391.2 912 391.8 909.4 387.6 Z" fill="#a8308e" stroke="#0b3a42" stroke-width="0.6"/>
<path d="M751.6 366.4 L791.6 397.2 L843.0 384.2 L838.6 379.4 Z" fill="#d457b6" stroke="#0b3a42" stroke-width="0.6" stroke-linejoin="round" />
<path d="M754.8 363.6 L791.4 389.4 L791.4 394.4 L754.8 368.6 Z" fill="#2aa9b4" stroke="#0b3a42" stroke-width="0.9" stroke-linejoin="round" />
<path d="M791.4 389.4 L838.5 378.6 L838.5 383.6 L791.4 394.4 Z" fill="#2093a0" stroke="#0b3a42" stroke-width="0.9" stroke-linejoin="round" />
<path d="M754.8 363.6 L800.8 351.0 L838.5 378.6 L791.4 389.4 Z" fill="#18717b" stroke="#0b3a42" stroke-width="0.9" stroke-linejoin="round" />
<ellipse cx="779.6" cy="357.6" rx="1.9" ry="1.3" fill="#2aa9b4" stroke="#0b3a42" stroke-width="0.5" />
<ellipse cx="817.4" cy="366.4" rx="1.9" ry="1.3" fill="#2aa9b4" stroke="#0b3a42" stroke-width="0.5" />
<ellipse cx="778.6" cy="373.8" rx="1.9" ry="1.3" fill="#2aa9b4" stroke="#0b3a42" stroke-width="0.5" />
<ellipse cx="815.0" cy="381.0" rx="1.9" ry="1.3" fill="#2aa9b4" stroke="#0b3a42" stroke-width="0.5" />
<ellipse cx="796.8" cy="370.0" rx="6.6" ry="3.2" fill="#2aa9b4" stroke="#0b3a42" stroke-width="0.9" />
<path d="M791.5999999999999 362.6 V369.6 A5.2 2.6 0 0 0 802.0 369.6 V362.6 Z" fill="url(#gbolt)" stroke="#0b3a42" stroke-width="0.8"/>
<path d="M783.8 354.6 V358.8 A13 5.6 0 0 0 809.8 358.8 V354.6 Z" fill="#125a64" stroke="#0b3a42" stroke-width="0.8"/>
<path d="M784.8 360.0 A13 5.6 0 0 0 808.8 360.0" fill="none" stroke="#7fd6de" stroke-width="1.2" stroke-dasharray="0.9 1.3"/>
<ellipse cx="796.8" cy="354.6" rx="13.0" ry="5.6" fill="#1d858f" stroke="#0b3a42" stroke-width="0.9" />
<rect x="777.3" y="355.4" width="3" height="14" fill="#f2e45a" stroke="#c9b92e" stroke-width="0.5"/>
<ellipse cx="778.8" cy="369.4" rx="2.2" ry="1.2" fill="#f2e45a" stroke="#c9b92e" stroke-width="0.5" />
<path d="M774.1999999999999 353.0 V356.59999999999997 A4.6 2 0 0 0 783.4 356.59999999999997 V353.0 Z" fill="#f0df48" stroke="#c9b92e" stroke-width="0.5"/>
<ellipse cx="778.8" cy="353.0" rx="4.6" ry="2.0" fill="#f8ee7a" stroke="#c9b92e" stroke-width="0.5" />
<ellipse cx="736.0" cy="358.7" rx="8.2" ry="4.3" fill="#1d858f" stroke="#0b3a42" stroke-width="0.9" /><path d="M729.4 349.6 V358.1 A6.6 3.3 0 0 0 742.6 358.1 V349.6 Z" fill="url(#gbolt)" stroke="#0b3a42" stroke-width="0.9"/><ellipse cx="736.0" cy="349.6" rx="6.6" ry="3.3" fill="#1b7f89" stroke="#0b3a42" stroke-width="0.9" /><ellipse cx="736.0" cy="349.6" rx="3.6" ry="1.8" fill="#0f4a54" stroke="#0b3a42" stroke-width="0.5" /><circle cx="736.6" cy="349.4" r="1.1" fill="#bfeef2"/>
<ellipse cx="843.2" cy="334.3" rx="8.2" ry="4.3" fill="#1d858f" stroke="#0b3a42" stroke-width="0.9" /><path d="M836.6 325.2 V333.7 A6.6 3.3 0 0 0 849.8 333.7 V325.2 Z" fill="url(#gbolt)" stroke="#0b3a42" stroke-width="0.9"/><ellipse cx="843.2" cy="325.2" rx="6.6" ry="3.3" fill="#1b7f89" stroke="#0b3a42" stroke-width="0.9" /><ellipse cx="843.2" cy="325.2" rx="3.6" ry="1.8" fill="#0f4a54" stroke="#0b3a42" stroke-width="0.5" /><circle cx="843.8" cy="325.0" r="1.1" fill="#bfeef2"/>
<ellipse cx="916.8" cy="386.1" rx="8.2" ry="4.3" fill="#1d858f" stroke="#0b3a42" stroke-width="0.9" /><path d="M910.2 377.0 V385.5 A6.6 3.3 0 0 0 923.4 385.5 V377.0 Z" fill="url(#gbolt)" stroke="#0b3a42" stroke-width="0.9"/><ellipse cx="916.8" cy="377.0" rx="6.6" ry="3.3" fill="#1b7f89" stroke="#0b3a42" stroke-width="0.9" /><ellipse cx="916.8" cy="377.0" rx="3.6" ry="1.8" fill="#0f4a54" stroke="#0b3a42" stroke-width="0.5" /><circle cx="917.4" cy="376.8" r="1.1" fill="#bfeef2"/>
<ellipse cx="809.2" cy="410.5" rx="8.2" ry="4.3" fill="#1d858f" stroke="#0b3a42" stroke-width="0.9" /><path d="M802.6 401.4 V409.9 A6.6 3.3 0 0 0 815.8 409.9 V401.4 Z" fill="url(#gbolt)" stroke="#0b3a42" stroke-width="0.9"/><ellipse cx="809.2" cy="401.4" rx="6.6" ry="3.3" fill="#1b7f89" stroke="#0b3a42" stroke-width="0.9" /><ellipse cx="809.2" cy="401.4" rx="3.6" ry="1.8" fill="#0f4a54" stroke="#0b3a42" stroke-width="0.5" /><circle cx="809.8" cy="401.2" r="1.1" fill="#bfeef2"/>
</g></svg>
</div>
<div id="rblue"></div>
<div id="status"><div id="statuspane">就绪</div></div>
<div id="dlgshadow"></div>
<div id="dlg">
 <div id="dlgtitle">产品更新比较
  <svg width="14" height="14" viewBox="0 0 14 14"><path d="M1 1 L13 13 M13 1 L1 13" stroke="#fff" stroke-width="1.3" fill="none"/></svg>
 </div>
<div style="position:absolute;left:0;top:34.5px;width:576px;height:4px;background:#fcfcfc"></div>
<div class="grp" style="left:12px;top:49.5px;width:266px;height:506.5px"></div>
<div class="grplabel" style="left:20px;top:39.5px">正在使用的产品</div>
<div class="grp" style="left:298px;top:49.5px;width:266px;height:506.5px"></div>
<div class="grplabel" style="left:305.5px;top:39.5px">新产品</div>
<div class="tree" style="left:23px;top:61.5px">
<div class="rows">
<svg style="position:absolute;left:0;top:0" width="222" height="463" viewBox="0 0 222 463"><g stroke="#7a7a7a" stroke-width="1" stroke-dasharray="1 1" shape-rendering="crispEdges">
<path d="M31.5 20 V463"/>
<path d="M18 11.5 H23"/>
<path d="M33.0 29.5 H42"/>
<path d="M33.0 47.5 H42"/>
<path d="M33.0 65.5 H42"/>
<path d="M33.0 83.5 H42"/>
<path d="M33.0 101.5 H42"/>
<path d="M33.0 119.5 H42"/>
<path d="M36.5 137.5 H42"/>
<path d="M33.0 155.5 H42"/>
<path d="M33.0 173.5 H42"/>
<path d="M33.0 191.5 H42"/>
<path d="M33.0 209.5 H42"/>
<path d="M33.0 227.5 H42"/>
<path d="M33.0 245.5 H42"/>
<path d="M33.0 263.5 H42"/>
<path d="M33.0 281.5 H42"/>
<path d="M33.0 299.5 H42"/>
<path d="M33.0 317.5 H42"/>
<path d="M33.0 335.5 H42"/>
<path d="M33.0 353.5 H42"/>
<path d="M33.0 371.5 H42"/>
<path d="M33.0 389.5 H42"/>
<path d="M33.0 407.5 H42"/>
<path d="M33.0 425.5 H42"/>
<path d="M33.0 443.5 H42"/>
<path d="M33.0 461.5 H42"/>
</g></svg>
<div class="row" style="top:1.5px"><svg style="position:absolute;left:7px;top:4px" width="11" height="11" viewBox="0 0 11 11"><rect x="0.5" y="0.5" width="10" height="10" fill="#f6f6f6" stroke="#959595"/><path d="M2.5 5.5 H8.5" stroke="#3a4a7a" stroke-width="1.1"/></svg><svg class="ck" style="position:absolute;left:23px;top:0px" width="16" height="16" viewBox="0 0 16 16"><rect x="0.75" y="0.75" width="14.5" height="14.5" fill="#fff" stroke="#333" stroke-width="1.4"/><path d="M3.6 8.2 L6.6 11.2 L12.6 4.4" fill="none" stroke="#4a4a4a" stroke-width="1.5"/></svg><svg style="position:absolute;left:39.5px;top:0" width="17" height="18" viewBox="0 0 17 18"><g stroke="#a89a20" stroke-width="0.8"><path d="M0.4 3 L2.2 1 H15.4 V7.2 L13.6 9.2 H0.4 Z" fill="#f8f27a"/><rect x="0.4" y="3" width="6.6" height="6.2" fill="#f2e63c"/><rect x="7" y="3" width="6.6" height="6.2" fill="#f2e63c"/><path d="M13.6 3 L15.4 1 M7 3 L8.8 1" fill="none"/></g><circle cx="4.6" cy="12.4" r="3.4" fill="#a8ccf6" stroke="#2a5fd0" stroke-width="1.2"/><path d="M3 12.4 L4.6 10.6 L6.2 12.4 L4.6 14.2Z" fill="#5a94ea"/></svg><span class="t" style="left:60.4px">减速箱<b> JSX-42600-1</b></span></div>
<div class="row" style="top:19.5px"><svg class="ck" style="position:absolute;left:42px;top:0px" width="16" height="16" viewBox="0 0 16 16"><rect x="0.75" y="0.75" width="14.5" height="14.5" fill="#fff" stroke="#333" stroke-width="1.4"/><path d="M3.6 8.2 L6.6 11.2 L12.6 4.4" fill="none" stroke="#4a4a4a" stroke-width="1.5"/></svg><svg style="position:absolute;left:58.5px;top:0" width="17" height="18" viewBox="0 0 17 18"><g stroke="#a89a20" stroke-width="0.8"><path d="M0.4 3 L2.2 1 H15.4 V7.2 L13.6 9.2 H0.4 Z" fill="#f8f27a"/><rect x="0.4" y="3" width="6.6" height="6.2" fill="#f2e63c"/><rect x="7" y="3" width="6.6" height="6.2" fill="#f2e63c"/><path d="M13.6 3 L15.4 1 M7 3 L8.8 1" fill="none"/></g><circle cx="4.6" cy="12.4" r="3.4" fill="#a8ccf6" stroke="#2a5fd0" stroke-width="1.2"/><path d="M3 12.4 L4.6 10.6 L6.2 12.4 L4.6 14.2Z" fill="#5a94ea"/></svg><span class="t" style="left:79.4px"><b>screw410</b></span></div>
<div class="row" style="top:37.5px"><svg class="ck" style="position:absolute;left:42px;top:0px" width="16" height="16" viewBox="0 0 16 16"><rect x="0.75" y="0.75" width="14.5" height="14.5" fill="#fff" stroke="#333" stroke-width="1.4"/><path d="M3.6 8.2 L6.6 11.2 L12.6 4.4" fill="none" stroke="#4a4a4a" stroke-width="1.5"/></svg><svg style="position:absolute;left:58.5px;top:0" width="17" height="18" viewBox="0 0 17 18"><g stroke="#a89a20" stroke-width="0.8"><path d="M0.6 3 L2.8 0.6 H9.6 V7.2 L7.3 9.6 H0.6 Z" fill="#f6ef6a"/><rect x="0.6" y="3" width="6.7" height="6.6" fill="#f2e63c"/><path d="M7.3 3 L9.6 0.6" fill="none"/></g><path d="M10.2 7.5 L13.8 13.2 H6.6 Z" fill="#9aec9a" stroke="#2fc02f" stroke-width="1.3" stroke-linejoin="round"/></svg><span class="t" style="left:79.4px">平键<b>12×4 JSX-42600-1-6-07</b></span></div>
<div class="row" style="top:55.5px"><svg class="ck" style="position:absolute;left:42px;top:0px" width="16" height="16" viewBox="0 0 16 16"><rect x="0.75" y="0.75" width="14.5" height="14.5" fill="#fff" stroke="#333" stroke-width="1.4"/><path d="M3.6 8.2 L6.6 11.2 L12.6 4.4" fill="none" stroke="#4a4a4a" stroke-width="1.5"/></svg><svg style="position:absolute;left:58.5px;top:0" width="17" height="18" viewBox="0 0 17 18"><g stroke="#a89a20" stroke-width="0.8"><path d="M0.6 3 L2.8 0.6 H9.6 V7.2 L7.3 9.6 H0.6 Z" fill="#f6ef6a"/><rect x="0.6" y="3" width="6.7" height="6.6" fill="#f2e63c"/><path d="M7.3 3 L9.6 0.6" fill="none"/></g><path d="M10.2 7.5 L13.8 13.2 H6.6 Z" fill="#9aec9a" stroke="#2fc02f" stroke-width="1.3" stroke-linejoin="round"/></svg><span class="t" style="left:79.4px">正齿轮<b> JSX-42600-1-6-06</b></span></div>
<div class="row" style="top:73.5px"><svg class="ck" style="position:absolute;left:42px;top:0px" width="16" height="16" viewBox="0 0 16 16"><rect x="0.75" y="0.75" width="14.5" height="14.5" fill="#fff" stroke="#333" stroke-width="1.4"/><path d="M3.6 8.2 L6.6 11.2 L12.6 4.4" fill="none" stroke="#4a4a4a" stroke-width="1.5"/></svg><svg style="position:absolute;left:58.5px;top:0" width="17" height="18" viewBox="0 0 17 18"><g stroke="#a89a20" stroke-width="0.8"><path d="M0.6 3 L2.8 0.6 H9.6 V7.2 L7.3 9.6 H0.6 Z" fill="#f6ef6a"/><rect x="0.6" y="3" width="6.7" height="6.6" fill="#f2e63c"/><path d="M7.3 3 L9.6 0.6" fill="none"/></g><path d="M10.2 7.5 L13.8 13.2 H6.6 Z" fill="#9aec9a" stroke="#2fc02f" stroke-width="1.3" stroke-linejoin="round"/></svg><span class="t" style="left:79.4px">平键<b>12×4 JSX-42600-1-6-07</b></span></div>
<div class="row" style="top:91.5px"><svg class="ck" style="position:absolute;left:42px;top:0px" width="16" height="16" viewBox="0 0 16 16"><rect x="0.75" y="0.75" width="14.5" height="14.5" fill="#fff" stroke="#333" stroke-width="1.4"/><path d="M3.6 8.2 L6.6 11.2 L12.6 4.4" fill="none" stroke="#4a4a4a" stroke-width="1.5"/></svg><svg style="position:absolute;left:58.5px;top:0" width="17" height="18" viewBox="0 0 17 18"><g stroke="#a89a20" stroke-width="0.8"><path d="M0.6 3 L2.8 0.6 H9.6 V7.2 L7.3 9.6 H0.6 Z" fill="#f6ef6a"/><rect x="0.6" y="3" width="6.7" height="6.6" fill="#f2e63c"/><path d="M7.3 3 L9.6 0.6" fill="none"/></g><path d="M10.2 7.5 L13.8 13.2 H6.6 Z" fill="#9aec9a" stroke="#2fc02f" stroke-width="1.3" stroke-linejoin="round"/></svg><span class="t" style="left:79.4px">螺母<b>M8 JSX-42600-1-7-02</b></span></div>
<div class="row" style="top:109.5px"><svg class="ck" style="position:absolute;left:42px;top:0px" width="16" height="16" viewBox="0 0 16 16"><rect x="0.75" y="0.75" width="14.5" height="14.5" fill="#fff" stroke="#333" stroke-width="1.4"/><path d="M3.6 8.2 L6.6 11.2 L12.6 4.4" fill="none" stroke="#4a4a4a" stroke-width="1.5"/></svg><svg style="position:absolute;left:58.5px;top:0" width="17" height="18" viewBox="0 0 17 18"><g stroke="#a89a20" stroke-width="0.8"><path d="M0.6 3 L2.8 0.6 H9.6 V7.2 L7.3 9.6 H0.6 Z" fill="#f6ef6a"/><rect x="0.6" y="3" width="6.7" height="6.6" fill="#f2e63c"/><path d="M7.3 3 L9.6 0.6" fill="none"/></g><path d="M10.2 7.5 L13.8 13.2 H6.6 Z" fill="#9aec9a" stroke="#2fc02f" stroke-width="1.3" stroke-linejoin="round"/></svg><span class="t" style="left:79.4px">垫片<b>8 JSX-42600-1-6-05</b></span></div>
<div class="row" style="top:127.5px"><svg style="position:absolute;left:26px;top:4px" width="11" height="11" viewBox="0 0 11 11"><rect x="0.5" y="0.5" width="10" height="10" fill="#f6f6f6" stroke="#959595"/><path d="M2.5 5.5 H8.5" stroke="#3a4a7a" stroke-width="1.1"/><path d="M5.5 2.5 V8.5" stroke="#3a4a7a" stroke-width="1.1"/></svg><svg class="ck" style="position:absolute;left:42px;top:0px" width="16" height="16" viewBox="0 0 16 16"><rect x="0.75" y="0.75" width="14.5" height="14.5" fill="#fff" stroke="#333" stroke-width="1.4"/><path d="M3.6 8.2 L6.6 11.2 L12.6 4.4" fill="none" stroke="#4a4a4a" stroke-width="1.5"/></svg><svg style="position:absolute;left:58.5px;top:0" width="17" height="18" viewBox="0 0 17 18"><g stroke="#a89a20" stroke-width="0.8"><path d="M0.4 3 L2.2 1 H15.4 V7.2 L13.6 9.2 H0.4 Z" fill="#f8f27a"/><rect x="0.4" y="3" width="6.6" height="6.2" fill="#f2e63c"/><rect x="7" y="3" width="6.6" height="6.2" fill="#f2e63c"/><path d="M13.6 3 L15.4 1 M7 3 L8.8 1" fill="none"/><rect x="0.4" y="9.2" width="6.6" height="6.4" fill="#f2e63c"/></g></svg><span class="t" style="left:79.4px">锥齿轮部件<b> JSX-42600-1-5</b></span></div>
<div class="row" style="top:145.5px"><svg class="ck" style="position:absolute;left:42px;top:0px" width="16" height="16" viewBox="0 0 16 16"><rect x="0.75" y="0.75" width="14.5" height="14.5" fill="#fff" stroke="#333" stroke-width="1.4"/><path d="M3.6 8.2 L6.6 11.2 L12.6 4.4" fill="none" stroke="#4a4a4a" stroke-width="1.5"/></svg><svg style="position:absolute;left:58.5px;top:0" width="17" height="18" viewBox="0 0 17 18"><g stroke="#a89a20" stroke-width="0.8"><path d="M0.6 3 L2.8 0.6 H9.6 V7.2 L7.3 9.6 H0.6 Z" fill="#f6ef6a"/><rect x="0.6" y="3" width="6.7" height="6.6" fill="#f2e63c"/><path d="M7.3 3 L9.6 0.6" fill="none"/></g><path d="M10.2 7.5 L13.8 13.2 H6.6 Z" fill="#9aec9a" stroke="#2fc02f" stroke-width="1.3" stroke-linejoin="round"/></svg><span class="t" style="left:79.4px">螺钉<b>M4×18 JSX-42600-1-7-05</b></span></div>
<div class="row" style="top:163.5px"><svg class="ck" style="position:absolute;left:42px;top:0px" width="16" height="16" viewBox="0 0 16 16"><rect x="0.75" y="0.75" width="14.5" height="14.5" fill="#fff" stroke="#333" stroke-width="1.4"/><path d="M3.6 8.2 L6.6 11.2 L12.6 4.4" fill="none" stroke="#4a4a4a" stroke-width="1.5"/></svg><svg style="position:absolute;left:58.5px;top:0" width="17" height="18" viewBox="0 0 17 18"><g stroke="#a89a20" stroke-width="0.8"><path d="M0.6 3 L2.8 0.6 H9.6 V7.2 L7.3 9.6 H0.6 Z" fill="#f6ef6a"/><rect x="0.6" y="3" width="6.7" height="6.6" fill="#f2e63c"/><path d="M7.3 3 L9.6 0.6" fill="none"/></g><path d="M10.2 7.5 L13.8 13.2 H6.6 Z" fill="#9aec9a" stroke="#2fc02f" stroke-width="1.3" stroke-linejoin="round"/></svg><span class="t" style="left:79.4px">螺钉<b>M4×18 JSX-42600-1-7-05</b></span></div>
<div class="row" style="top:181.5px"><svg class="ck" style="position:absolute;left:42px;top:0px" width="16" height="16" viewBox="0 0 16 16"><rect x="0.75" y="0.75" width="14.5" height="14.5" fill="#fff" stroke="#333" stroke-width="1.4"/><path d="M3.6 8.2 L6.6 11.2 L12.6 4.4" fill="none" stroke="#4a4a4a" stroke-width="1.5"/></svg><svg style="position:absolute;left:58.5px;top:0" width="17" height="18" viewBox="0 0 17 18"><g stroke="#a89a20" stroke-width="0.8"><path d="M0.6 3 L2.8 0.6 H9.6 V7.2 L7.3 9.6 H0.6 Z" fill="#f6ef6a"/><rect x="0.6" y="3" width="6.7" height="6.6" fill="#f2e63c"/><path d="M7.3 3 L9.6 0.6" fill="none"/></g><path d="M10.2 7.5 L13.8 13.2 H6.6 Z" fill="#9aec9a" stroke="#2fc02f" stroke-width="1.3" stroke-linejoin="round"/></svg><span class="t" style="left:79.4px">螺钉<b>M4×18 JSX-42600-1-7-05</b></span></div>
<div class="row" style="top:199.5px"><svg class="ck" style="position:absolute;left:42px;top:0px" width="16" height="16" viewBox="0 0 16 16"><rect x="0.75" y="0.75" width="14.5" height="14.5" fill="#fff" stroke="#333" stroke-width="1.4"/><path d="M3.6 8.2 L6.6 11.2 L12.6 4.4" fill="none" stroke="#4a4a4a" stroke-width="1.5"/></svg><svg style="position:absolute;left:58.5px;top:0" width="17" height="18" viewBox="0 0 17 18"><g stroke="#a89a20" stroke-width="0.8"><path d="M0.6 3 L2.8 0.6 H9.6 V7.2 L7.3 9.6 H0.6 Z" fill="#f6ef6a"/><rect x="0.6" y="3" width="6.7" height="6.6" fill="#f2e63c"/><path d="M7.3 3 L9.6 0.6" fill="none"/></g><path d="M10.2 7.5 L13.8 13.2 H6.6 Z" fill="#9aec9a" stroke="#2fc02f" stroke-width="1.3" stroke-linejoin="round"/></svg><span class="t" style="left:79.4px">螺栓<b>M6 JSX-42600-1-6-08</b></span></div>
<div class="row" style="top:217.5px"><svg class="ck" style="position:absolute;left:42px;top:0px" width="16" height="16" viewBox="0 0 16 16"><rect x="0.75" y="0.75" width="14.5" height="14.5" fill="#fff" stroke="#333" stroke-width="1.4"/><path d="M3.6 8.2 L6.6 11.2 L12.6 4.4" fill="none" stroke="#4a4a4a" stroke-width="1.5"/></svg><svg style="position:absolute;left:58.5px;top:0" width="17" height="18" viewBox="0 0 17 18"><g stroke="#a89a20" stroke-width="0.8"><path d="M0.6 3 L2.8 0.6 H9.6 V7.2 L7.3 9.6 H0.6 Z" fill="#f6ef6a"/><rect x="0.6" y="3" width="6.7" height="6.6" fill="#f2e63c"/><path d="M7.3 3 L9.6 0.6" fill="none"/></g><path d="M10.2 7.5 L13.8 13.2 H6.6 Z" fill="#9aec9a" stroke="#2fc02f" stroke-width="1.3" stroke-linejoin="round"/></svg><span class="t" style="left:79.4px">螺栓<b>M6 JSX-42600-1-6-08</b></span></div>
<div class="row" style="top:235.5px"><svg class="ck" style="position:absolute;left:42px;top:0px" width="16" height="16" viewBox="0 0 16 16"><rect x="0.75" y="0.75" width="14.5" height="14.5" fill="#fff" stroke="#333" stroke-width="1.4"/><path d="M3.6 8.2 L6.6 11.2 L12.6 4.4" fill="none" stroke="#4a4a4a" stroke-width="1.5"/></svg><svg style="position:absolute;left:58.5px;top:0" width="17" height="18" viewBox="0 0 17 18"><g stroke="#a89a20" stroke-width="0.8"><path d="M0.6 3 L2.8 0.6 H9.6 V7.2 L7.3 9.6 H0.6 Z" fill="#f6ef6a"/><rect x="0.6" y="3" width="6.7" height="6.6" fill="#f2e63c"/><path d="M7.3 3 L9.6 0.6" fill="none"/></g><path d="M10.2 7.5 L13.8 13.2 H6.6 Z" fill="#9aec9a" stroke="#2fc02f" stroke-width="1.3" stroke-linejoin="round"/></svg><span class="t" style="left:79.4px">螺栓<b>M6 JSX-42600-1-6-08</b></span></div>
<div class="row" style="top:253.5px"><svg class="ck" style="position:absolute;left:42px;top:0px" width="16" height="16" viewBox="0 0 16 16"><rect x="0.75" y="0.75" width="14.5" height="14.5" fill="#fff" stroke="#333" stroke-width="1.4"/><path d="M3.6 8.2 L6.6 11.2 L12.6 4.4" fill="none" stroke="#4a4a4a" stroke-width="1.5"/></svg><svg style="position:absolute;left:58.5px;top:0" width="17" height="18" viewBox="0 0 17 18"><g stroke="#a89a20" stroke-width="0.8"><path d="M0.6 3 L2.8 0.6 H9.6 V7.2 L7.3 9.6 H0.6 Z" fill="#f6ef6a"/><rect x="0.6" y="3" width="6.7" height="6.6" fill="#f2e63c"/><path d="M7.3 3 L9.6 0.6" fill="none"/></g><path d="M10.2 7.5 L13.8 13.2 H6.6 Z" fill="#9aec9a" stroke="#2fc02f" stroke-width="1.3" stroke-linejoin="round"/></svg><span class="t" style="left:79.4px">螺栓<b>M6 JSX-42600-1-6-08</b></span></div>
<div class="row" style="top:271.5px"><svg class="ck" style="position:absolute;left:42px;top:0px" width="16" height="16" viewBox="0 0 16 16"><rect x="0.75" y="0.75" width="14.5" height="14.5" fill="#fff" stroke="#333" stroke-width="1.4"/><path d="M3.6 8.2 L6.6 11.2 L12.6 4.4" fill="none" stroke="#4a4a4a" stroke-width="1.5"/></svg><svg style="position:absolute;left:58.5px;top:0" width="17" height="18" viewBox="0 0 17 18"><g stroke="#a89a20" stroke-width="0.8"><path d="M0.6 3 L2.8 0.6 H9.6 V7.2 L7.3 9.6 H0.6 Z" fill="#f6ef6a"/><rect x="0.6" y="3" width="6.7" height="6.6" fill="#f2e63c"/><path d="M7.3 3 L9.6 0.6" fill="none"/></g><path d="M10.2 7.5 L13.8 13.2 H6.6 Z" fill="#9aec9a" stroke="#2fc02f" stroke-width="1.3" stroke-linejoin="round"/></svg><span class="t" style="left:79.4px">手柄<b> JSX-42600-1-7-03</b></span></div>
<div class="row" style="top:289.5px"><svg class="ck" style="position:absolute;left:42px;top:0px" width="16" height="16" viewBox="0 0 16 16"><rect x="0.75" y="0.75" width="14.5" height="14.5" fill="#fff" stroke="#333" stroke-width="1.4"/><path d="M3.6 8.2 L6.6 11.2 L12.6 4.4" fill="none" stroke="#4a4a4a" stroke-width="1.5"/></svg><svg style="position:absolute;left:58.5px;top:0" width="17" height="18" viewBox="0 0 17 18"><g stroke="#a89a20" stroke-width="0.8"><path d="M0.6 3 L2.8 0.6 H9.6 V7.2 L7.3 9.6 H0.6 Z" fill="#f6ef6a"/><rect x="0.6" y="3" width="6.7" height="6.6" fill="#f2e63c"/><path d="M7.3 3 L9.6 0.6" fill="none"/></g><path d="M10.2 7.5 L13.8 13.2 H6.6 Z" fill="#9aec9a" stroke="#2fc02f" stroke-width="1.3" stroke-linejoin="round"/></svg><span class="t" style="left:79.4px">注油孔盖<b> JSX-42600-1-7-04</b></span></div>
<div class="row" style="top:307.5px"><svg class="ck" style="position:absolute;left:42px;top:0px" width="16" height="16" viewBox="0 0 16 16"><rect x="0.75" y="0.75" width="14.5" height="14.5" fill="#fff" stroke="#333" stroke-width="1.4"/><path d="M3.6 8.2 L6.6 11.2 L12.6 4.4" fill="none" stroke="#4a4a4a" stroke-width="1.5"/></svg><svg style="position:absolute;left:58.5px;top:0" width="17" height="18" viewBox="0 0 17 18"><g stroke="#a89a20" stroke-width="0.8"><path d="M0.6 3 L2.8 0.6 H9.6 V7.2 L7.3 9.6 H0.6 Z" fill="#f6ef6a"/><rect x="0.6" y="3" width="6.7" height="6.6" fill="#f2e63c"/><path d="M7.3 3 L9.6 0.6" fill="none"/></g><path d="M10.2 7.5 L13.8 13.2 H6.6 Z" fill="#9aec9a" stroke="#2fc02f" stroke-width="1.3" stroke-linejoin="round"/></svg><span class="t" style="left:79.4px">箱盖<b> JSX-42600-1-6-012</b></span></div>
<div class="row" style="top:325.5px"><svg class="ck" style="position:absolute;left:42px;top:0px" width="16" height="16" viewBox="0 0 16 16"><rect x="0.75" y="0.75" width="14.5" height="14.5" fill="#fff" stroke="#333" stroke-width="1.4"/><path d="M3.6 8.2 L6.6 11.2 L12.6 4.4" fill="none" stroke="#4a4a4a" stroke-width="1.5"/></svg><svg style="position:absolute;left:58.5px;top:0" width="17" height="18" viewBox="0 0 17 18"><g stroke="#a89a20" stroke-width="0.8"><path d="M0.4 3 L2.2 1 H15.4 V7.2 L13.6 9.2 H0.4 Z" fill="#f8f27a"/><rect x="0.4" y="3" width="6.6" height="6.2" fill="#f2e63c"/><rect x="7" y="3" width="6.6" height="6.2" fill="#f2e63c"/><path d="M13.6 3 L15.4 1 M7 3 L8.8 1" fill="none"/></g><circle cx="4.6" cy="12.4" r="3.4" fill="#a8ccf6" stroke="#2a5fd0" stroke-width="1.2"/><path d="M3 12.4 L4.6 10.6 L6.2 12.4 L4.6 14.2Z" fill="#5a94ea"/></svg><span class="t" style="left:79.4px">轴承盖<b>35_1 JSX-42600-1-6-14</b></span></div>
<div class="row" style="top:343.5px"><svg class="ck" style="position:absolute;left:42px;top:0px" width="16" height="16" viewBox="0 0 16 16"><rect x="0.75" y="0.75" width="14.5" height="14.5" fill="#fff" stroke="#333" stroke-width="1.4"/><path d="M3.6 8.2 L6.6 11.2 L12.6 4.4" fill="none" stroke="#4a4a4a" stroke-width="1.5"/></svg><svg style="position:absolute;left:58.5px;top:0" width="17" height="18" viewBox="0 0 17 18"><g stroke="#a89a20" stroke-width="0.8"><path d="M0.6 3 L2.8 0.6 H9.6 V7.2 L7.3 9.6 H0.6 Z" fill="#f6ef6a"/><rect x="0.6" y="3" width="6.7" height="6.6" fill="#f2e63c"/><path d="M7.3 3 L9.6 0.6" fill="none"/></g><path d="M10.2 7.5 L13.8 13.2 H6.6 Z" fill="#9aec9a" stroke="#2fc02f" stroke-width="1.3" stroke-linejoin="round"/></svg><span class="t" style="left:79.4px">垫圈<b>35_1 JSX-42600-1-7-06</b></span></div>
<div class="row" style="top:361.5px"><svg class="ck" style="position:absolute;left:42px;top:0px" width="16" height="16" viewBox="0 0 16 16"><rect x="0.75" y="0.75" width="14.5" height="14.5" fill="#fff" stroke="#333" stroke-width="1.4"/><path d="M3.6 8.2 L6.6 11.2 L12.6 4.4" fill="none" stroke="#4a4a4a" stroke-width="1.5"/></svg><svg style="position:absolute;left:58.5px;top:0" width="17" height="18" viewBox="0 0 17 18"><g stroke="#a89a20" stroke-width="0.8"><path d="M0.6 3 L2.8 0.6 H9.6 V7.2 L7.3 9.6 H0.6 Z" fill="#f6ef6a"/><rect x="0.6" y="3" width="6.7" height="6.6" fill="#f2e63c"/><path d="M7.3 3 L9.6 0.6" fill="none"/></g><path d="M10.2 7.5 L13.8 13.2 H6.6 Z" fill="#9aec9a" stroke="#2fc02f" stroke-width="1.3" stroke-linejoin="round"/></svg><span class="t" style="left:79.4px">垫圈<b>35_1 JSX-42600-1-7-06</b></span></div>
<div class="row" style="top:379.5px"><svg class="ck" style="position:absolute;left:42px;top:0px" width="16" height="16" viewBox="0 0 16 16"><rect x="0.75" y="0.75" width="14.5" height="14.5" fill="#fff" stroke="#333" stroke-width="1.4"/><path d="M3.6 8.2 L6.6 11.2 L12.6 4.4" fill="none" stroke="#4a4a4a" stroke-width="1.5"/></svg><svg style="position:absolute;left:58.5px;top:0" width="17" height="18" viewBox="0 0 17 18"><g stroke="#a89a20" stroke-width="0.8"><path d="M0.6 3 L2.8 0.6 H9.6 V7.2 L7.3 9.6 H0.6 Z" fill="#f6ef6a"/><rect x="0.6" y="3" width="6.7" height="6.6" fill="#f2e63c"/><path d="M7.3 3 L9.6 0.6" fill="none"/></g><path d="M10.2 7.5 L13.8 13.2 H6.6 Z" fill="#9aec9a" stroke="#2fc02f" stroke-width="1.3" stroke-linejoin="round"/></svg><span class="t" style="left:79.4px">垫圈<b>35_1 JSX-42600-1-7-06</b></span></div>
<div class="row" style="top:397.5px"><svg class="ck" style="position:absolute;left:42px;top:0px" width="16" height="16" viewBox="0 0 16 16"><rect x="0.75" y="0.75" width="14.5" height="14.5" fill="#fff" stroke="#333" stroke-width="1.4"/><path d="M3.6 8.2 L6.6 11.2 L12.6 4.4" fill="none" stroke="#4a4a4a" stroke-width="1.5"/></svg><svg style="position:absolute;left:58.5px;top:0" width="17" height="18" viewBox="0 0 17 18"><g stroke="#a89a20" stroke-width="0.8"><path d="M0.6 3 L2.8 0.6 H9.6 V7.2 L7.3 9.6 H0.6 Z" fill="#f6ef6a"/><rect x="0.6" y="3" width="6.7" height="6.6" fill="#f2e63c"/><path d="M7.3 3 L9.6 0.6" fill="none"/></g><path d="M10.2 7.5 L13.8 13.2 H6.6 Z" fill="#9aec9a" stroke="#2fc02f" stroke-width="1.3" stroke-linejoin="round"/></svg><span class="t" style="left:79.4px">圆锥滚子轴承<b>15 JSX-42600-1-8</b></span></div>
<div class="row" style="top:415.5px"><svg class="ck" style="position:absolute;left:42px;top:0px" width="16" height="16" viewBox="0 0 16 16"><rect x="0.75" y="0.75" width="14.5" height="14.5" fill="#fff" stroke="#333" stroke-width="1.4"/><path d="M3.6 8.2 L6.6 11.2 L12.6 4.4" fill="none" stroke="#4a4a4a" stroke-width="1.5"/></svg><svg style="position:absolute;left:58.5px;top:0" width="17" height="18" viewBox="0 0 17 18"><g stroke="#a89a20" stroke-width="0.8"><path d="M0.6 3 L2.8 0.6 H9.6 V7.2 L7.3 9.6 H0.6 Z" fill="#f6ef6a"/><rect x="0.6" y="3" width="6.7" height="6.6" fill="#f2e63c"/><path d="M7.3 3 L9.6 0.6" fill="none"/></g><path d="M10.2 7.5 L13.8 13.2 H6.6 Z" fill="#9aec9a" stroke="#2fc02f" stroke-width="1.3" stroke-linejoin="round"/></svg><span class="t" style="left:79.4px">圆锥滚子轴承<b>15 JSX-42600-1-8</b></span></div>
<div class="row" style="top:433.5px"><svg class="ck" style="position:absolute;left:42px;top:0px" width="16" height="16" viewBox="0 0 16 16"><rect x="0.75" y="0.75" width="14.5" height="14.5" fill="#fff" stroke="#333" stroke-width="1.4"/><path d="M3.6 8.2 L6.6 11.2 L12.6 4.4" fill="none" stroke="#4a4a4a" stroke-width="1.5"/></svg><svg style="position:absolute;left:58.5px;top:0" width="17" height="18" viewBox="0 0 17 18"><g stroke="#a89a20" stroke-width="0.8"><path d="M0.6 3 L2.8 0.6 H9.6 V7.2 L7.3 9.6 H0.6 Z" fill="#f6ef6a"/><rect x="0.6" y="3" width="6.7" height="6.6" fill="#f2e63c"/><path d="M7.3 3 L9.6 0.6" fill="none"/></g><path d="M10.2 7.5 L13.8 13.2 H6.6 Z" fill="#9aec9a" stroke="#2fc02f" stroke-width="1.3" stroke-linejoin="round"/></svg><span class="t" style="left:79.4px">蜗杆<b> JSX-42600-1-6-131</b></span></div>
<div class="row" style="top:451.5px"><svg class="ck" style="position:absolute;left:42px;top:0px" width="16" height="16" viewBox="0 0 16 16"><rect x="0.75" y="0.75" width="14.5" height="14.5" fill="#fff" stroke="#333" stroke-width="1.4"/><path d="M3.6 8.2 L6.6 11.2 L12.6 4.4" fill="none" stroke="#4a4a4a" stroke-width="1.5"/></svg><svg style="position:absolute;left:58.5px;top:0" width="17" height="18" viewBox="0 0 17 18"><g stroke="#a89a20" stroke-width="0.8"><path d="M0.6 3 L2.8 0.6 H9.6 V7.2 L7.3 9.6 H0.6 Z" fill="#f6ef6a"/><rect x="0.6" y="3" width="6.7" height="6.6" fill="#f2e63c"/><path d="M7.3 3 L9.6 0.6" fill="none"/></g><path d="M10.2 7.5 L13.8 13.2 H6.6 Z" fill="#9aec9a" stroke="#2fc02f" stroke-width="1.3" stroke-linejoin="round"/></svg><span class="t" style="left:79.4px">轴承盖<b>35 JSX-42600-1-6-15</b></span></div>
</div>
<div class="vs"><svg style="position:absolute;left:5px;top:8px" width="12" height="8" viewBox="0 0 12 8"><path d="M1.5 6.6 L6 2 L10.5 6.6" fill="none" stroke="#505050" stroke-width="2"/></svg><div class="thumb" style="left:1px;top:22px;width:19px;height:262px"></div><svg style="position:absolute;left:5px;top:447px" width="12" height="8" viewBox="0 0 12 8"><path d="M1.5 1.4 L6 6 L10.5 1.4" fill="none" stroke="#505050" stroke-width="2"/></svg></div>
<div class="hs"><svg style="position:absolute;left:7px;top:5px" width="8" height="12" viewBox="0 0 8 12"><path d="M6.6 1.5 L2 6 L6.6 10.5" fill="none" stroke="#505050" stroke-width="2"/></svg><div class="thumb" style="left:22px;top:2px;width:134px;height:17.5px"></div><svg style="position:absolute;left:206px;top:5px" width="8" height="12" viewBox="0 0 8 12"><path d="M1.4 1.5 L6 6 L1.4 10.5" fill="none" stroke="#505050" stroke-width="2"/></svg></div>
</div>
<div class="tree" style="left:308px;top:61.5px">
<div class="rows">
<svg style="position:absolute;left:0;top:0" width="222" height="463" viewBox="0 0 222 463"><g stroke="#7a7a7a" stroke-width="1" stroke-dasharray="1 1" shape-rendering="crispEdges">
<path d="M31.5 20 V463"/>
<path d="M18 11.5 H23"/>
<path d="M33.0 29.5 H42"/>
<path d="M33.0 47.5 H42"/>
<path d="M33.0 65.5 H42"/>
<path d="M33.0 83.5 H42"/>
<path d="M33.0 101.5 H42"/>
<path d="M36.5 119.5 H42"/>
<path d="M33.0 137.5 H42"/>
<path d="M33.0 155.5 H42"/>
<path d="M33.0 173.5 H42"/>
<path d="M33.0 191.5 H42"/>
<path d="M33.0 209.5 H42"/>
<path d="M33.0 227.5 H42"/>
<path d="M33.0 245.5 H42"/>
<path d="M33.0 263.5 H42"/>
<path d="M33.0 281.5 H42"/>
<path d="M33.0 299.5 H42"/>
<path d="M33.0 317.5 H42"/>
<path d="M33.0 335.5 H42"/>
<path d="M33.0 353.5 H42"/>
<path d="M33.0 371.5 H42"/>
<path d="M33.0 389.5 H42"/>
<path d="M33.0 407.5 H42"/>
<path d="M33.0 425.5 H42"/>
<path d="M33.0 443.5 H42"/>
<path d="M33.0 461.5 H42"/>
</g></svg>
<div class="row" style="top:1.5px"><svg style="position:absolute;left:7px;top:4px" width="11" height="11" viewBox="0 0 11 11"><rect x="0.5" y="0.5" width="10" height="10" fill="#f6f6f6" stroke="#959595"/><path d="M2.5 5.5 H8.5" stroke="#3a4a7a" stroke-width="1.1"/></svg><svg class="ck" style="position:absolute;left:23px;top:0px" width="16" height="16" viewBox="0 0 16 16"><rect x="0.75" y="0.75" width="14.5" height="14.5" fill="#fff" stroke="#333" stroke-width="1.4"/><path d="M3.6 8.2 L6.6 11.2 L12.6 4.4" fill="none" stroke="#4a4a4a" stroke-width="1.5"/></svg><svg style="position:absolute;left:38.5px;top:0" width="17" height="18" viewBox="0 0 17 18"><g stroke="#e01818" stroke-width="1.1" stroke-linejoin="round"><path d="M1.4 5 L4 1.2 H9.6 L6.8 5 Z" fill="#fff"/><path d="M6.8 5 L9.6 1.2 V6.4 L6.8 10 Z" fill="#e82020"/><rect x="1.4" y="5" width="5.4" height="5" fill="#fff"/><rect x="1.4" y="10" width="5.4" height="5" fill="#fff"/><path d="M6.8 10 L9.6 6.4 H14.4 L12 10 Z" fill="#ffd8d8"/><rect x="6.8" y="10" width="5.2" height="5" fill="#fff"/><path d="M12 10 L14.4 6.4 V11.6 L12 15 Z" fill="#e82020"/></g></svg><span class="t" style="left:60.4px">减速箱<b> JSX-42600-1</b></span></div>
<div class="row" style="top:19.5px"><svg class="ck" style="position:absolute;left:42px;top:0px" width="16" height="16" viewBox="0 0 16 16"><rect x="0.75" y="0.75" width="14.5" height="14.5" fill="#fff" stroke="#333" stroke-width="1.4"/><path d="M3.6 8.2 L6.6 11.2 L12.6 4.4" fill="none" stroke="#4a4a4a" stroke-width="1.5"/></svg><svg style="position:absolute;left:58.5px;top:0" width="17" height="18" viewBox="0 0 17 18"><g stroke="#a89a20" stroke-width="0.8"><path d="M0.6 3 L2.8 0.6 H9.6 V7.2 L7.3 9.6 H0.6 Z" fill="#f6ef6a"/><rect x="0.6" y="3" width="6.7" height="6.6" fill="#f2e63c"/><path d="M7.3 3 L9.6 0.6" fill="none"/></g><path d="M10.2 7.5 L13.8 13.2 H6.6 Z" fill="#9aec9a" stroke="#2fc02f" stroke-width="1.3" stroke-linejoin="round"/></svg><span class="t" style="left:79.4px">平键<b>12×4 JSX-42600-1-6-07</b></span></div>
<div class="row" style="top:37.5px"><svg class="ck" style="position:absolute;left:42px;top:0px" width="16" height="16" viewBox="0 0 16 16"><rect x="0.75" y="0.75" width="14.5" height="14.5" fill="#fff" stroke="#333" stroke-width="1.4"/><path d="M3.6 8.2 L6.6 11.2 L12.6 4.4" fill="none" stroke="#4a4a4a" stroke-width="1.5"/></svg><svg style="position:absolute;left:58.5px;top:0" width="17" height="18" viewBox="0 0 17 18"><g stroke="#a89a20" stroke-width="0.8"><path d="M0.6 3 L2.8 0.6 H9.6 V7.2 L7.3 9.6 H0.6 Z" fill="#f6ef6a"/><rect x="0.6" y="3" width="6.7" height="6.6" fill="#f2e63c"/><path d="M7.3 3 L9.6 0.6" fill="none"/></g><path d="M10.2 7.5 L13.8 13.2 H6.6 Z" fill="#9aec9a" stroke="#2fc02f" stroke-width="1.3" stroke-linejoin="round"/></svg><span class="t" style="left:79.4px">正齿轮<b> JSX-42600-1-6-06</b></span></div>
<div class="row" style="top:55.5px"><svg class="ck" style="position:absolute;left:42px;top:0px" width="16" height="16" viewBox="0 0 16 16"><rect x="0.75" y="0.75" width="14.5" height="14.5" fill="#fff" stroke="#333" stroke-width="1.4"/><path d="M3.6 8.2 L6.6 11.2 L12.6 4.4" fill="none" stroke="#4a4a4a" stroke-width="1.5"/></svg><svg style="position:absolute;left:58.5px;top:0" width="17" height="18" viewBox="0 0 17 18"><g stroke="#a89a20" stroke-width="0.8"><path d="M0.6 3 L2.8 0.6 H9.6 V7.2 L7.3 9.6 H0.6 Z" fill="#f6ef6a"/><rect x="0.6" y="3" width="6.7" height="6.6" fill="#f2e63c"/><path d="M7.3 3 L9.6 0.6" fill="none"/></g><path d="M10.2 7.5 L13.8 13.2 H6.6 Z" fill="#9aec9a" stroke="#2fc02f" stroke-width="1.3" stroke-linejoin="round"/></svg><span class="t" style="left:79.4px">平键<b>12×4 JSX-42600-1-6-07</b></span></div>
<div class="row" style="top:73.5px"><svg class="ck" style="position:absolute;left:42px;top:0px" width="16" height="16" viewBox="0 0 16 16"><rect x="0.75" y="0.75" width="14.5" height="14.5" fill="#fff" stroke="#333" stroke-width="1.4"/><path d="M3.6 8.2 L6.6 11.2 L12.6 4.4" fill="none" stroke="#4a4a4a" stroke-width="1.5"/></svg><svg style="position:absolute;left:58.5px;top:0" width="17" height="18" viewBox="0 0 17 18"><g stroke="#a89a20" stroke-width="0.8"><path d="M0.6 3 L2.8 0.6 H9.6 V7.2 L7.3 9.6 H0.6 Z" fill="#f6ef6a"/><rect x="0.6" y="3" width="6.7" height="6.6" fill="#f2e63c"/><path d="M7.3 3 L9.6 0.6" fill="none"/></g><path d="M10.2 7.5 L13.8 13.2 H6.6 Z" fill="#9aec9a" stroke="#2fc02f" stroke-width="1.3" stroke-linejoin="round"/></svg><span class="t" style="left:79.4px">螺母<b>M8 JSX-42600-1-7-02</b></span></div>
<div class="row" style="top:91.5px"><svg class="ck" style="position:absolute;left:42px;top:0px" width="16" height="16" viewBox="0 0 16 16"><rect x="0.75" y="0.75" width="14.5" height="14.5" fill="#fff" stroke="#333" stroke-width="1.4"/><path d="M3.6 8.2 L6.6 11.2 L12.6 4.4" fill="none" stroke="#4a4a4a" stroke-width="1.5"/></svg><svg style="position:absolute;left:58.5px;top:0" width="17" height="18" viewBox="0 0 17 18"><g stroke="#a89a20" stroke-width="0.8"><path d="M0.6 3 L2.8 0.6 H9.6 V7.2 L7.3 9.6 H0.6 Z" fill="#f6ef6a"/><rect x="0.6" y="3" width="6.7" height="6.6" fill="#f2e63c"/><path d="M7.3 3 L9.6 0.6" fill="none"/></g><path d="M10.2 7.5 L13.8 13.2 H6.6 Z" fill="#9aec9a" stroke="#2fc02f" stroke-width="1.3" stroke-linejoin="round"/></svg><span class="t" style="left:79.4px">垫片<b>8 JSX-42600-1-6-05</b></span></div>
<div class="row" style="top:109.5px"><svg style="position:absolute;left:26px;top:4px" width="11" height="11" viewBox="0 0 11 11"><rect x="0.5" y="0.5" width="10" height="10" fill="#f6f6f6" stroke="#959595"/><path d="M2.5 5.5 H8.5" stroke="#3a4a7a" stroke-width="1.1"/><path d="M5.5 2.5 V8.5" stroke="#3a4a7a" stroke-width="1.1"/></svg><svg class="ck" style="position:absolute;left:42px;top:0px" width="16" height="16" viewBox="0 0 16 16"><rect x="0.75" y="0.75" width="14.5" height="14.5" fill="#fff" stroke="#333" stroke-width="1.4"/><path d="M3.6 8.2 L6.6 11.2 L12.6 4.4" fill="none" stroke="#4a4a4a" stroke-width="1.5"/></svg><svg style="position:absolute;left:58.5px;top:0" width="17" height="18" viewBox="0 0 17 18"><g stroke="#a89a20" stroke-width="0.8"><path d="M0.4 3 L2.2 1 H15.4 V7.2 L13.6 9.2 H0.4 Z" fill="#f8f27a"/><rect x="0.4" y="3" width="6.6" height="6.2" fill="#f2e63c"/><rect x="7" y="3" width="6.6" height="6.2" fill="#f2e63c"/><path d="M13.6 3 L15.4 1 M7 3 L8.8 1" fill="none"/><rect x="0.4" y="9.2" width="6.6" height="6.4" fill="#f2e63c"/></g></svg><span class="t" style="left:79.4px">锥齿轮部件<b> JSX-42600-1-5</b></span></div>
<div class="row" style="top:127.5px"><svg class="ck" style="position:absolute;left:42px;top:0px" width="16" height="16" viewBox="0 0 16 16"><rect x="0.75" y="0.75" width="14.5" height="14.5" fill="#fff" stroke="#333" stroke-width="1.4"/><path d="M3.6 8.2 L6.6 11.2 L12.6 4.4" fill="none" stroke="#4a4a4a" stroke-width="1.5"/></svg><svg style="position:absolute;left:58.5px;top:0" width="17" height="18" viewBox="0 0 17 18"><g stroke="#a89a20" stroke-width="0.8"><path d="M0.6 3 L2.8 0.6 H9.6 V7.2 L7.3 9.6 H0.6 Z" fill="#f6ef6a"/><rect x="0.6" y="3" width="6.7" height="6.6" fill="#f2e63c"/><path d="M7.3 3 L9.6 0.6" fill="none"/></g><path d="M10.2 7.5 L13.8 13.2 H6.6 Z" fill="#9aec9a" stroke="#2fc02f" stroke-width="1.3" stroke-linejoin="round"/></svg><span class="t" style="left:79.4px">螺钉<b>M4×18 JSX-42600-1-7-05</b></span></div>
<div class="row" style="top:145.5px"><svg class="ck" style="position:absolute;left:42px;top:0px" width="16" height="16" viewBox="0 0 16 16"><rect x="0.75" y="0.75" width="14.5" height="14.5" fill="#fff" stroke="#333" stroke-width="1.4"/><path d="M3.6 8.2 L6.6 11.2 L12.6 4.4" fill="none" stroke="#4a4a4a" stroke-width="1.5"/></svg><svg style="position:absolute;left:58.5px;top:0" width="17" height="18" viewBox="0 0 17 18"><g stroke="#a89a20" stroke-width="0.8"><path d="M0.6 3 L2.8 0.6 H9.6 V7.2 L7.3 9.6 H0.6 Z" fill="#f6ef6a"/><rect x="0.6" y="3" width="6.7" height="6.6" fill="#f2e63c"/><path d="M7.3 3 L9.6 0.6" fill="none"/></g><path d="M10.2 7.5 L13.8 13.2 H6.6 Z" fill="#9aec9a" stroke="#2fc02f" stroke-width="1.3" stroke-linejoin="round"/></svg><span class="t" style="left:79.4px">螺钉<b>M4×18 JSX-42600-1-7-05</b></span></div>
<div class="row" style="top:163.5px"><svg class="ck" style="position:absolute;left:42px;top:0px" width="16" height="16" viewBox="0 0 16 16"><rect x="0.75" y="0.75" width="14.5" height="14.5" fill="#fff" stroke="#333" stroke-width="1.4"/><path d="M3.6 8.2 L6.6 11.2 L12.6 4.4" fill="none" stroke="#4a4a4a" stroke-width="1.5"/></svg><svg style="position:absolute;left:58.5px;top:0" width="17" height="18" viewBox="0 0 17 18"><g stroke="#a89a20" stroke-width="0.8"><path d="M0.6 3 L2.8 0.6 H9.6 V7.2 L7.3 9.6 H0.6 Z" fill="#f6ef6a"/><rect x="0.6" y="3" width="6.7" height="6.6" fill="#f2e63c"/><path d="M7.3 3 L9.6 0.6" fill="none"/></g><path d="M10.2 7.5 L13.8 13.2 H6.6 Z" fill="#9aec9a" stroke="#2fc02f" stroke-width="1.3" stroke-linejoin="round"/></svg><span class="t" style="left:79.4px">螺钉<b>M4×18 JSX-42600-1-7-05</b></span></div>
<div class="row" style="top:181.5px"><svg class="ck" style="position:absolute;left:42px;top:0px" width="16" height="16" viewBox="0 0 16 16"><rect x="0.75" y="0.75" width="14.5" height="14.5" fill="#fff" stroke="#333" stroke-width="1.4"/><path d="M3.6 8.2 L6.6 11.2 L12.6 4.4" fill="none" stroke="#4a4a4a" stroke-width="1.5"/></svg><svg style="position:absolute;left:58.5px;top:0" width="17" height="18" viewBox="0 0 17 18"><g stroke="#a89a20" stroke-width="0.8"><path d="M0.6 3 L2.8 0.6 H9.6 V7.2 L7.3 9.6 H0.6 Z" fill="#f6ef6a"/><rect x="0.6" y="3" width="6.7" height="6.6" fill="#f2e63c"/><path d="M7.3 3 L9.6 0.6" fill="none"/></g><path d="M10.2 7.5 L13.8 13.2 H6.6 Z" fill="#9aec9a" stroke="#2fc02f" stroke-width="1.3" stroke-linejoin="round"/></svg><span class="t" style="left:79.4px">螺栓<b>M6 JSX-42600-1-6-08</b></span></div>
<div class="row" style="top:199.5px"><svg class="ck" style="position:absolute;left:42px;top:0px" width="16" height="16" viewBox="0 0 16 16"><rect x="0.75" y="0.75" width="14.5" height="14.5" fill="#fff" stroke="#333" stroke-width="1.4"/><path d="M3.6 8.2 L6.6 11.2 L12.6 4.4" fill="none" stroke="#4a4a4a" stroke-width="1.5"/></svg><svg style="position:absolute;left:58.5px;top:0" width="17" height="18" viewBox="0 0 17 18"><g stroke="#a89a20" stroke-width="0.8"><path d="M0.6 3 L2.8 0.6 H9.6 V7.2 L7.3 9.6 H0.6 Z" fill="#f6ef6a"/><rect x="0.6" y="3" width="6.7" height="6.6" fill="#f2e63c"/><path d="M7.3 3 L9.6 0.6" fill="none"/></g><path d="M10.2 7.5 L13.8 13.2 H6.6 Z" fill="#9aec9a" stroke="#2fc02f" stroke-width="1.3" stroke-linejoin="round"/></svg><span class="t" style="left:79.4px">螺栓<b>M6 JSX-42600-1-6-08</b></span></div>
<div class="row" style="top:217.5px"><svg class="ck" style="position:absolute;left:42px;top:0px" width="16" height="16" viewBox="0 0 16 16"><rect x="0.75" y="0.75" width="14.5" height="14.5" fill="#fff" stroke="#333" stroke-width="1.4"/><path d="M3.6 8.2 L6.6 11.2 L12.6 4.4" fill="none" stroke="#4a4a4a" stroke-width="1.5"/></svg><svg style="position:absolute;left:58.5px;top:0" width="17" height="18" viewBox="0 0 17 18"><g stroke="#a89a20" stroke-width="0.8"><path d="M0.6 3 L2.8 0.6 H9.6 V7.2 L7.3 9.6 H0.6 Z" fill="#f6ef6a"/><rect x="0.6" y="3" width="6.7" height="6.6" fill="#f2e63c"/><path d="M7.3 3 L9.6 0.6" fill="none"/></g><path d="M10.2 7.5 L13.8 13.2 H6.6 Z" fill="#9aec9a" stroke="#2fc02f" stroke-width="1.3" stroke-linejoin="round"/></svg><span class="t" style="left:79.4px">螺栓<b>M6 JSX-42600-1-6-08</b></span></div>
<div class="row" style="top:235.5px"><svg class="ck" style="position:absolute;left:42px;top:0px" width="16" height="16" viewBox="0 0 16 16"><rect x="0.75" y="0.75" width="14.5" height="14.5" fill="#fff" stroke="#333" stroke-width="1.4"/><path d="M3.6 8.2 L6.6 11.2 L12.6 4.4" fill="none" stroke="#4a4a4a" stroke-width="1.5"/></svg><svg style="position:absolute;left:58.5px;top:0" width="17" height="18" viewBox="0 0 17 18"><g stroke="#a89a20" stroke-width="0.8"><path d="M0.6 3 L2.8 0.6 H9.6 V7.2 L7.3 9.6 H0.6 Z" fill="#f6ef6a"/><rect x="0.6" y="3" width="6.7" height="6.6" fill="#f2e63c"/><path d="M7.3 3 L9.6 0.6" fill="none"/></g><path d="M10.2 7.5 L13.8 13.2 H6.6 Z" fill="#9aec9a" stroke="#2fc02f" stroke-width="1.3" stroke-linejoin="round"/></svg><span class="t" style="left:79.4px">螺栓<b>M6 JSX-42600-1-6-08</b></span></div>
<div class="row" style="top:253.5px"><svg class="ck" style="position:absolute;left:42px;top:0px" width="16" height="16" viewBox="0 0 16 16"><rect x="0.75" y="0.75" width="14.5" height="14.5" fill="#fff" stroke="#333" stroke-width="1.4"/><path d="M3.6 8.2 L6.6 11.2 L12.6 4.4" fill="none" stroke="#4a4a4a" stroke-width="1.5"/></svg><svg style="position:absolute;left:58.5px;top:0" width="17" height="18" viewBox="0 0 17 18"><g stroke="#a89a20" stroke-width="0.8"><path d="M0.6 3 L2.8 0.6 H9.6 V7.2 L7.3 9.6 H0.6 Z" fill="#f6ef6a"/><rect x="0.6" y="3" width="6.7" height="6.6" fill="#f2e63c"/><path d="M7.3 3 L9.6 0.6" fill="none"/></g><path d="M10.2 7.5 L13.8 13.2 H6.6 Z" fill="#9aec9a" stroke="#2fc02f" stroke-width="1.3" stroke-linejoin="round"/></svg><span class="t" style="left:79.4px">手柄<b> JSX-42600-1-7-03</b></span></div>
<div class="row" style="top:271.5px"><svg class="ck" style="position:absolute;left:42px;top:0px" width="16" height="16" viewBox="0 0 16 16"><rect x="0.75" y="0.75" width="14.5" height="14.5" fill="#fff" stroke="#333" stroke-width="1.4"/><path d="M3.6 8.2 L6.6 11.2 L12.6 4.4" fill="none" stroke="#4a4a4a" stroke-width="1.5"/></svg><svg style="position:absolute;left:58.5px;top:0" width="17" height="18" viewBox="0 0 17 18"><g stroke="#a89a20" stroke-width="0.8"><path d="M0.6 3 L2.8 0.6 H9.6 V7.2 L7.3 9.6 H0.6 Z" fill="#f6ef6a"/><rect x="0.6" y="3" width="6.7" height="6.6" fill="#f2e63c"/><path d="M7.3 3 L9.6 0.6" fill="none"/></g><path d="M10.2 7.5 L13.8 13.2 H6.6 Z" fill="#9aec9a" stroke="#2fc02f" stroke-width="1.3" stroke-linejoin="round"/></svg><span class="t" style="left:79.4px">注油孔盖<b> JSX-42600-1-7-04</b></span></div>
<div class="row" style="top:289.5px"><svg class="ck" style="position:absolute;left:42px;top:0px" width="16" height="16" viewBox="0 0 16 16"><rect x="0.75" y="0.75" width="14.5" height="14.5" fill="#fff" stroke="#333" stroke-width="1.4"/><path d="M3.6 8.2 L6.6 11.2 L12.6 4.4" fill="none" stroke="#4a4a4a" stroke-width="1.5"/></svg><svg style="position:absolute;left:58.5px;top:0" width="17" height="18" viewBox="0 0 17 18"><g stroke="#a89a20" stroke-width="0.8"><path d="M0.6 3 L2.8 0.6 H9.6 V7.2 L7.3 9.6 H0.6 Z" fill="#f6ef6a"/><rect x="0.6" y="3" width="6.7" height="6.6" fill="#f2e63c"/><path d="M7.3 3 L9.6 0.6" fill="none"/></g><path d="M10.2 7.5 L13.8 13.2 H6.6 Z" fill="#9aec9a" stroke="#2fc02f" stroke-width="1.3" stroke-linejoin="round"/></svg><span class="t" style="left:79.4px">箱盖<b> JSX-42600-1-6-012</b></span></div>
<div class="row" style="top:307.5px"><svg class="ck" style="position:absolute;left:42px;top:0px" width="16" height="16" viewBox="0 0 16 16"><rect x="0.75" y="0.75" width="14.5" height="14.5" fill="#fff" stroke="#333" stroke-width="1.4"/><path d="M3.6 8.2 L6.6 11.2 L12.6 4.4" fill="none" stroke="#4a4a4a" stroke-width="1.5"/></svg><svg style="position:absolute;left:57.5px;top:0" width="17" height="18" viewBox="0 0 17 18"><g stroke="#e01818" stroke-width="1.1" stroke-linejoin="round"><path d="M1.4 5 L4 1.2 H9.6 L6.8 5 Z" fill="#fff"/><path d="M6.8 5 L9.6 1.2 V6.4 L6.8 10 Z" fill="#e82020"/><rect x="1.4" y="5" width="5.4" height="5" fill="#fff"/><rect x="1.4" y="10" width="5.4" height="5" fill="#fff"/><path d="M6.8 10 L9.6 6.4 H14.4 L12 10 Z" fill="#ffd8d8"/><rect x="6.8" y="10" width="5.2" height="5" fill="#fff"/><path d="M12 10 L14.4 6.4 V11.6 L12 15 Z" fill="#e82020"/></g></svg><span class="t" style="left:79.4px">螺塞<b> JSX-42600-1-6-13</b></span></div>
<div class="row" style="top:325.5px"><svg class="ck" style="position:absolute;left:42px;top:0px" width="16" height="16" viewBox="0 0 16 16"><rect x="0.75" y="0.75" width="14.5" height="14.5" fill="#fff" stroke="#333" stroke-width="1.4"/><path d="M3.6 8.2 L6.6 11.2 L12.6 4.4" fill="none" stroke="#4a4a4a" stroke-width="1.5"/></svg><svg style="position:absolute;left:57.5px;top:0" width="17" height="18" viewBox="0 0 17 18"><g stroke="#e01818" stroke-width="1.1" stroke-linejoin="round"><path d="M1.4 5 L4 1.2 H9.6 L6.8 5 Z" fill="#fff"/><path d="M6.8 5 L9.6 1.2 V6.4 L6.8 10 Z" fill="#e82020"/><rect x="1.4" y="5" width="5.4" height="5" fill="#fff"/><rect x="1.4" y="10" width="5.4" height="5" fill="#fff"/><path d="M6.8 10 L9.6 6.4 H14.4 L12 10 Z" fill="#ffd8d8"/><rect x="6.8" y="10" width="5.2" height="5" fill="#fff"/><path d="M12 10 L14.4 6.4 V11.6 L12 15 Z" fill="#e82020"/></g></svg><span class="t" style="left:79.4px"><b>bearing cover head envelope</b></span></div>
<div class="row" style="top:343.5px"><svg class="ck" style="position:absolute;left:42px;top:0px" width="16" height="16" viewBox="0 0 16 16"><rect x="0.75" y="0.75" width="14.5" height="14.5" fill="#fff" stroke="#333" stroke-width="1.4"/><path d="M3.6 8.2 L6.6 11.2 L12.6 4.4" fill="none" stroke="#4a4a4a" stroke-width="1.5"/></svg><svg style="position:absolute;left:58.5px;top:0" width="17" height="18" viewBox="0 0 17 18"><g stroke="#a89a20" stroke-width="0.8"><path d="M0.6 3 L2.8 0.6 H9.6 V7.2 L7.3 9.6 H0.6 Z" fill="#f6ef6a"/><rect x="0.6" y="3" width="6.7" height="6.6" fill="#f2e63c"/><path d="M7.3 3 L9.6 0.6" fill="none"/></g><path d="M10.2 7.5 L13.8 13.2 H6.6 Z" fill="#9aec9a" stroke="#2fc02f" stroke-width="1.3" stroke-linejoin="round"/></svg><span class="t" style="left:79.4px">垫圈<b>35_1 JSX-42600-1-7-06</b></span></div>
<div class="row" style="top:361.5px"><svg class="ck" style="position:absolute;left:42px;top:0px" width="16" height="16" viewBox="0 0 16 16"><rect x="0.75" y="0.75" width="14.5" height="14.5" fill="#fff" stroke="#333" stroke-width="1.4"/><path d="M3.6 8.2 L6.6 11.2 L12.6 4.4" fill="none" stroke="#4a4a4a" stroke-width="1.5"/></svg><svg style="position:absolute;left:58.5px;top:0" width="17" height="18" viewBox="0 0 17 18"><g stroke="#a89a20" stroke-width="0.8"><path d="M0.6 3 L2.8 0.6 H9.6 V7.2 L7.3 9.6 H0.6 Z" fill="#f6ef6a"/><rect x="0.6" y="3" width="6.7" height="6.6" fill="#f2e63c"/><path d="M7.3 3 L9.6 0.6" fill="none"/></g><path d="M10.2 7.5 L13.8 13.2 H6.6 Z" fill="#9aec9a" stroke="#2fc02f" stroke-width="1.3" stroke-linejoin="round"/></svg><span class="t" style="left:79.4px">垫圈<b>35_1 JSX-42600-1-7-06</b></span></div>
<div class="row" style="top:379.5px"><svg class="ck" style="position:absolute;left:42px;top:0px" width="16" height="16" viewBox="0 0 16 16"><rect x="0.75" y="0.75" width="14.5" height="14.5" fill="#fff" stroke="#333" stroke-width="1.4"/><path d="M3.6 8.2 L6.6 11.2 L12.6 4.4" fill="none" stroke="#4a4a4a" stroke-width="1.5"/></svg><svg style="position:absolute;left:58.5px;top:0" width="17" height="18" viewBox="0 0 17 18"><g stroke="#a89a20" stroke-width="0.8"><path d="M0.6 3 L2.8 0.6 H9.6 V7.2 L7.3 9.6 H0.6 Z" fill="#f6ef6a"/><rect x="0.6" y="3" width="6.7" height="6.6" fill="#f2e63c"/><path d="M7.3 3 L9.6 0.6" fill="none"/></g><path d="M10.2 7.5 L13.8 13.2 H6.6 Z" fill="#9aec9a" stroke="#2fc02f" stroke-width="1.3" stroke-linejoin="round"/></svg><span class="t" style="left:79.4px">垫圈<b>35_1 JSX-42600-1-7-06</b></span></div>
<div class="row" style="top:397.5px"><svg class="ck" style="position:absolute;left:42px;top:0px" width="16" height="16" viewBox="0 0 16 16"><rect x="0.75" y="0.75" width="14.5" height="14.5" fill="#fff" stroke="#333" stroke-width="1.4"/><path d="M3.6 8.2 L6.6 11.2 L12.6 4.4" fill="none" stroke="#4a4a4a" stroke-width="1.5"/></svg><svg style="position:absolute;left:58.5px;top:0" width="17" height="18" viewBox="0 0 17 18"><g stroke="#a89a20" stroke-width="0.8"><path d="M0.6 3 L2.8 0.6 H9.6 V7.2 L7.3 9.6 H0.6 Z" fill="#f6ef6a"/><rect x="0.6" y="3" width="6.7" height="6.6" fill="#f2e63c"/><path d="M7.3 3 L9.6 0.6" fill="none"/></g><path d="M10.2 7.5 L13.8 13.2 H6.6 Z" fill="#9aec9a" stroke="#2fc02f" stroke-width="1.3" stroke-linejoin="round"/></svg><span class="t" style="left:79.4px">圆锥滚子轴承<b>15 JSX-42600-1-8</b></span></div>
<div class="row" style="top:415.5px"><svg class="ck" style="position:absolute;left:42px;top:0px" width="16" height="16" viewBox="0 0 16 16"><rect x="0.75" y="0.75" width="14.5" height="14.5" fill="#fff" stroke="#333" stroke-width="1.4"/><path d="M3.6 8.2 L6.6 11.2 L12.6 4.4" fill="none" stroke="#4a4a4a" stroke-width="1.5"/></svg><svg style="position:absolute;left:58.5px;top:0" width="17" height="18" viewBox="0 0 17 18"><g stroke="#a89a20" stroke-width="0.8"><path d="M0.6 3 L2.8 0.6 H9.6 V7.2 L7.3 9.6 H0.6 Z" fill="#f6ef6a"/><rect x="0.6" y="3" width="6.7" height="6.6" fill="#f2e63c"/><path d="M7.3 3 L9.6 0.6" fill="none"/></g><path d="M10.2 7.5 L13.8 13.2 H6.6 Z" fill="#9aec9a" stroke="#2fc02f" stroke-width="1.3" stroke-linejoin="round"/></svg><span class="t" style="left:79.4px">圆锥滚子轴承<b>15 JSX-42600-1-8</b></span></div>
<div class="row" style="top:433.5px"><svg class="ck" style="position:absolute;left:42px;top:0px" width="16" height="16" viewBox="0 0 16 16"><rect x="0.75" y="0.75" width="14.5" height="14.5" fill="#fff" stroke="#333" stroke-width="1.4"/><path d="M3.6 8.2 L6.6 11.2 L12.6 4.4" fill="none" stroke="#4a4a4a" stroke-width="1.5"/></svg><svg style="position:absolute;left:58.5px;top:0" width="17" height="18" viewBox="0 0 17 18"><g stroke="#a89a20" stroke-width="0.8"><path d="M0.6 3 L2.8 0.6 H9.6 V7.2 L7.3 9.6 H0.6 Z" fill="#f6ef6a"/><rect x="0.6" y="3" width="6.7" height="6.6" fill="#f2e63c"/><path d="M7.3 3 L9.6 0.6" fill="none"/></g><path d="M10.2 7.5 L13.8 13.2 H6.6 Z" fill="#9aec9a" stroke="#2fc02f" stroke-width="1.3" stroke-linejoin="round"/></svg><span class="t" style="left:79.4px">蜗杆<b> JSX-42600-1-6-131</b></span></div>
<div class="row" style="top:451.5px"><svg class="ck" style="position:absolute;left:42px;top:0px" width="16" height="16" viewBox="0 0 16 16"><rect x="0.75" y="0.75" width="14.5" height="14.5" fill="#fff" stroke="#333" stroke-width="1.4"/><path d="M3.6 8.2 L6.6 11.2 L12.6 4.4" fill="none" stroke="#4a4a4a" stroke-width="1.5"/></svg><svg style="position:absolute;left:58.5px;top:0" width="17" height="18" viewBox="0 0 17 18"><g stroke="#a89a20" stroke-width="0.8"><path d="M0.6 3 L2.8 0.6 H9.6 V7.2 L7.3 9.6 H0.6 Z" fill="#f6ef6a"/><rect x="0.6" y="3" width="6.7" height="6.6" fill="#f2e63c"/><path d="M7.3 3 L9.6 0.6" fill="none"/></g><path d="M10.2 7.5 L13.8 13.2 H6.6 Z" fill="#9aec9a" stroke="#2fc02f" stroke-width="1.3" stroke-linejoin="round"/></svg><span class="t" style="left:79.4px">轴承盖<b>35 JSX-42600-1-6-15</b></span></div>
</div>
<div class="vs"><svg style="position:absolute;left:5px;top:8px" width="12" height="8" viewBox="0 0 12 8"><path d="M1.5 6.6 L6 2 L10.5 6.6" fill="none" stroke="#505050" stroke-width="2"/></svg><div class="thumb" style="left:1px;top:22px;width:19px;height:262px"></div><svg style="position:absolute;left:5px;top:447px" width="12" height="8" viewBox="0 0 12 8"><path d="M1.5 1.4 L6 6 L10.5 1.4" fill="none" stroke="#505050" stroke-width="2"/></svg></div>
<div class="hs"><svg style="position:absolute;left:7px;top:5px" width="8" height="12" viewBox="0 0 8 12"><path d="M6.6 1.5 L2 6 L6.6 10.5" fill="none" stroke="#505050" stroke-width="2"/></svg><div class="thumb" style="left:22px;top:2px;width:134px;height:17.5px"></div><svg style="position:absolute;left:206px;top:5px" width="8" height="12" viewBox="0 0 8 12"><path d="M1.4 1.5 L6 6 L1.4 10.5" fill="none" stroke="#505050" stroke-width="2"/></svg></div>
</div>
</div>
</div>
</body></html>
